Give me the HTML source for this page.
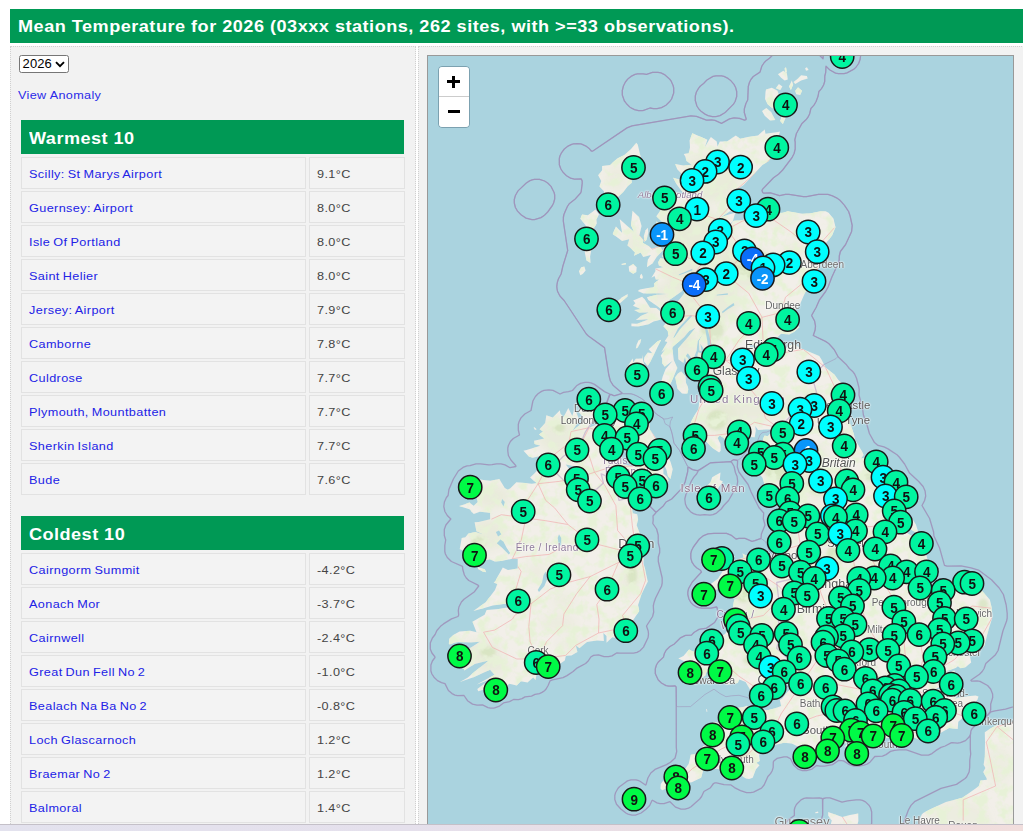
<!DOCTYPE html>
<html><head><meta charset="utf-8"><title>Mean Temperature</title>
<style>
html,body{margin:0;padding:0;background:#fff;}
body{font-family:"Liberation Sans",sans-serif;width:1023px;height:831px;overflow:hidden;position:relative;}
#hdr{position:absolute;left:10px;top:9px;width:1100px;height:34px;background:#009955;}
#hdr span{position:absolute;left:8px;top:9px;color:#fff;font-weight:bold;font-size:16px;line-height:18px;white-space:nowrap;letter-spacing:0.45px;transform-origin:0 50%;transform:scaleX(1.13);}
#lp{position:absolute;left:10px;top:46px;width:404px;height:900px;background:#f2f2f2;border:1px dotted #d0d0d0;}
#rp{position:absolute;left:418px;top:46px;width:700px;height:900px;background:#f2f2f2;border:1px dotted #d0d0d0;}
#sel{position:absolute;left:19px;top:55px;width:48px;height:16px;border:1px solid #767676;border-radius:2.5px;background:#fff;font-size:13px;line-height:16px;color:#000;}
#sel span{position:absolute;left:2.6px;top:0px;letter-spacing:0.1px;}
#sel svg{position:absolute;left:35px;top:5px;}
#va{position:absolute;left:18px;top:88px;font-size:11.5px;line-height:14px;color:#2a2ae8;white-space:nowrap;letter-spacing:0.3px;transform-origin:0 50%;transform:scaleX(1.1);}
.tbl{position:absolute;left:21px;width:383px;}
.th{height:34px;background:#009955;position:relative;margin-bottom:3px;}
.th span{position:absolute;left:8px;top:9.5px;color:#fff;font-weight:bold;font-size:16px;line-height:18px;letter-spacing:0.42px;white-space:nowrap;transform-origin:0 50%;transform:scaleX(1.13);}
.row{height:32px;margin-bottom:2px;position:relative;}
.c1,.c2{position:absolute;top:0;height:30px;border:1px solid #e2e2e2;background:#f3f3f3;}
.c1{left:0;width:283px;}
.c2{left:287.6px;width:94px;}
.c1 span{position:absolute;left:7px;top:8.8px;word-spacing:-0.8px;font-size:11.5px;line-height:14px;color:#2222e6;white-space:nowrap;letter-spacing:0.35px;transform-origin:0 50%;transform:scaleX(1.1);}
.c2 span{position:absolute;left:7px;top:8.8px;font-size:11.5px;line-height:14px;color:#444;white-space:nowrap;letter-spacing:0.35px;transform-origin:0 50%;transform:scaleX(1.1);}
#map{position:absolute;left:427px;top:55px;width:585px;height:800px;border:1px solid #999;background:#aad3df;overflow:hidden;}
#map svg.land{position:absolute;left:0;top:0;}
.m{position:absolute;width:21.8px;height:21.8px;border:1.7px solid #181818;border-radius:50%;box-sizing:content-box;margin:-0.6px;text-align:center;font-weight:bold;font-size:15px;line-height:24.8px;color:#111;letter-spacing:-0.3px;}
.m b{display:inline-block;transform:scaleX(0.9);}
#mk circle{stroke:#181818;stroke-width:1.5px;}
#mk text{stroke:none;font-family:"Liberation Sans",sans-serif;font-weight:bold;font-size:15px;text-anchor:middle;letter-spacing:-0.3px;}
.m.g{background:#00f5a0;}
.m.c{background:#00ffff;}
.m.l{background:#00fa46;}
.m.b1{background:#0a96fa;color:#fff;}
.m.b2{background:#0a6efa;color:#fff;}
#zc{position:absolute;left:9.6px;top:9.6px;width:30px;height:60px;border:1.4px solid rgba(40,70,90,0.35);border-radius:4px;background-clip:padding-box;}
#zc div{width:30px;height:30px;background:#fff;position:relative;box-sizing:border-box;}
#zc div.a{border-bottom:1px solid #ccc;border-radius:3px 3px 0 0;}
#zc div.b{border-radius:0 0 3px 3px;}
#zc i{position:absolute;background:#000;}
#bot{position:absolute;left:0;top:824px;width:1023px;height:7px;background:linear-gradient(90deg,#e3e2ee 0%,#e5e0ec 40%,#eddde0 75%,#f1dedd 100%);border-top:1px solid #c4c0c8;box-sizing:border-box;}
.lbl{position:absolute;font-size:11px;color:#666;white-space:nowrap;transform:translate(-50%,-50%);line-height:1;text-shadow:0 0 2px #fff,0 0 2px #fff,0 0 1px #fff;}
</style></head><body>
<div id="hdr"><span>Mean Temperature for 2026 (03xxx stations, 262 sites, with &gt;=33 observations).</span></div>
<div id="lp"></div><div id="rp"></div>
<div id="sel"><span>2026</span><svg width="10" height="7" viewBox="0 0 10 7"><path d="M1 1.2 L5 5.2 L9 1.2" fill="none" stroke="#000" stroke-width="1.9"/></svg></div>
<div id="va">View Anomaly</div>
<div class="tbl" style="top:120px"><div class="th"><span>Warmest 10</span></div><div class="row"><div class="c1"><span>Scilly: St Marys Airport</span></div><div class="c2"><span>9.1°C</span></div></div><div class="row"><div class="c1"><span>Guernsey: Airport</span></div><div class="c2"><span>8.0°C</span></div></div><div class="row"><div class="c1"><span>Isle Of Portland</span></div><div class="c2"><span>8.0°C</span></div></div><div class="row"><div class="c1"><span>Saint Helier</span></div><div class="c2"><span>8.0°C</span></div></div><div class="row"><div class="c1"><span>Jersey: Airport</span></div><div class="c2"><span>7.9°C</span></div></div><div class="row"><div class="c1"><span>Camborne</span></div><div class="c2"><span>7.8°C</span></div></div><div class="row"><div class="c1"><span>Culdrose</span></div><div class="c2"><span>7.7°C</span></div></div><div class="row"><div class="c1"><span>Plymouth, Mountbatten</span></div><div class="c2"><span>7.7°C</span></div></div><div class="row"><div class="c1"><span>Sherkin Island</span></div><div class="c2"><span>7.7°C</span></div></div><div class="row"><div class="c1"><span>Bude</span></div><div class="c2"><span>7.6°C</span></div></div></div>
<div class="tbl" style="top:516.4px"><div class="th"><span>Coldest 10</span></div><div class="row"><div class="c1"><span>Cairngorm Summit</span></div><div class="c2"><span>-4.2°C</span></div></div><div class="row"><div class="c1"><span>Aonach Mor</span></div><div class="c2"><span>-3.7°C</span></div></div><div class="row"><div class="c1"><span>Cairnwell</span></div><div class="c2"><span>-2.4°C</span></div></div><div class="row"><div class="c1"><span>Great Dun Fell No 2</span></div><div class="c2"><span>-1.0°C</span></div></div><div class="row"><div class="c1"><span>Bealach Na Ba No 2</span></div><div class="c2"><span>-0.8°C</span></div></div><div class="row"><div class="c1"><span>Loch Glascarnoch</span></div><div class="c2"><span>1.2°C</span></div></div><div class="row"><div class="c1"><span>Braemar No 2</span></div><div class="c2"><span>1.2°C</span></div></div><div class="row"><div class="c1"><span>Balmoral</span></div><div class="c2"><span>1.4°C</span></div></div><div class="row"><div class="c1"><span>Altnaharra No 2</span></div><div class="c2"><span>1.5°C</span></div></div><div class="row"><div class="c1"><span>Aviemore</span></div><div class="c2"><span>1.6°C</span></div></div></div>
<div id="map">
<svg class="land" width="585" height="800" viewBox="0 0 585 800">
<path d="M459.8 -80.0 L459.7 -76.0 L458.8 -71.5 L457.2 -53.0 L451.1 -34.5 L443.2 -19.0 L438.0 -14.4 L435.0 -12.9 L429.9 -11.5 L429.9 -10.5 L432.1 -5.0 L432.7 -1.0 L432.1 3.5 L430.6 7.5 L428.2 11.0 L426.0 13.1 L419.0 16.9 L416.0 17.7 L410.5 17.7 L407.5 17.1 L401.9 14.0 L398.0 10.3 L397.7 16.5 L396.8 20.0 L396.7 25.5 L395.6 29.0 L393.5 32.6 L390.9 35.5 L390.1 40.0 L388.1 45.5 L386.0 49.1 L382.9 52.5 L381.6 58.0 L380.1 61.0 L378.5 63.2 L374.0 67.4 L368.4 77.5 L366.8 84.0 L367.2 86.0 L367.2 93.0 L366.1 97.5 L364.1 101.5 L354.7 114.0 L350.5 118.2 L345.5 121.8 L334.5 133.3 L334.0 134.5 L334.7 136.5 L335.5 137.2 L342.5 136.8 L351.5 139.7 L357.5 138.3 L361.0 138.3 L375.5 140.7 L378.5 140.7 L390.5 138.3 L400.0 138.4 L404.5 139.9 L409.5 142.4 L412.0 144.3 L416.5 149.4 L420.6 155.5 L422.1 160.0 L424.2 169.5 L423.6 175.5 L417.6 188.5 L412.4 195.5 L411.3 200.0 L411.2 204.0 L410.6 206.5 L403.9 221.0 L400.1 231.0 L397.6 235.5 L391.4 244.0 L388.1 251.5 L383.8 259.0 L383.8 260.0 L386.6 265.0 L387.5 270.0 L387.1 274.0 L385.3 279.5 L397.5 285.4 L400.7 287.5 L406.1 293.5 L410.3 301.0 L418.5 308.8 L421.3 312.5 L425.0 315.8 L426.6 318.0 L428.6 322.5 L430.7 330.5 L431.2 333.5 L431.0 339.0 L432.2 343.5 L432.9 349.0 L434.7 353.5 L435.4 359.0 L438.6 367.5 L441.4 377.5 L446.5 386.6 L450.0 389.4 L456.0 390.9 L460.0 392.9 L469.0 398.8 L471.2 401.0 L476.6 408.0 L481.5 417.1 L490.5 425.3 L495.1 430.5 L497.1 435.0 L497.7 440.0 L496.6 444.5 L494.0 449.5 L501.6 462.5 L505.6 476.0 L505.9 480.0 L511.6 492.0 L516.5 509.4 L519.0 510.2 L533.0 509.8 L543.0 511.9 L550.5 514.1 L563.5 523.8 L571.2 532.0 L575.4 538.5 L578.2 549.0 L579.2 557.5 L579.2 562.0 L578.6 565.0 L574.9 575.0 L570.1 594.5 L567.5 598.7 L557.8 607.5 L556.1 612.5 L554.2 615.5 L551.5 618.2 L543.5 623.7 L542.9 624.5 L543.5 625.1 L549.0 624.8 L552.0 625.4 L559.6 629.5 L562.6 633.0 L564.6 638.0 L564.7 641.5 L562.7 648.0 L562.7 653.5 L562.1 656.0 L556.2 663.0 L548.0 668.8 L543.8 673.0 L542.9 675.0 L542.6 678.0 L541.1 681.0 L537.5 684.6 L532.5 686.7 L529.5 687.2 L524.0 686.6 L523.0 686.9 L517.2 690.0 L513.0 691.4 L508.0 694.4 L504.0 697.6 L500.5 699.1 L493.5 699.1 L478.5 693.8 L471.0 693.8 L466.5 694.3 L462.5 695.4 L458.0 698.6 L454.5 700.1 L446.8 700.5 L442.0 706.2 L439.0 708.1 L436.0 709.1 L431.0 710.2 L426.0 710.2 L421.5 708.6 L415.5 704.9 L411.0 704.3 L404.5 708.6 L396.5 710.2 L392.0 710.2 L388.5 709.5 L384.0 713.1 L378.5 714.7 L374.5 714.7 L370.0 713.1 L366.0 709.6 L362.5 702.8 L359.0 700.9 L356.0 700.8 L349.0 702.4 L345.8 705.0 L345.3 706.0 L345.2 711.5 L344.1 715.0 L342.5 717.6 L339.9 720.5 L336.1 729.0 L333.5 732.1 L325.5 736.1 L322.5 736.7 L318.5 736.6 L312.5 734.6 L306.5 731.6 L303.0 728.9 L296.0 728.7 L288.5 726.8 L287.0 726.8 L285.5 727.5 L282.5 731.7 L275.9 735.5 L273.6 740.5 L271.7 743.0 L263.0 750.7 L260.5 752.1 L257.0 753.2 L253.0 753.2 L247.5 751.1 L242.0 745.7 L236.0 747.7 L232.0 747.7 L229.0 746.9 L224.5 744.2 L224.0 744.5 L221.7 749.5 L218.0 753.2 L213.1 757.0 L207.5 759.1 L204.0 759.2 L200.0 758.1 L197.9 757.0 L192.8 753.0 L188.5 748.2 L186.8 743.5 L186.8 739.5 L187.5 736.8 L189.9 732.5 L191.5 730.8 L198.0 725.9 L199.5 724.9 L203.0 723.8 L208.0 723.8 L210.0 724.4 L211.6 725.0 L217.5 729.0 L218.0 728.9 L219.9 722.0 L222.8 717.0 L227.0 713.4 L238.5 708.6 L242.5 706.2 L247.1 702.0 L248.7 695.5 L248.3 691.5 L248.2 631.0 L247.0 629.8 L241.0 630.2 L238.0 629.6 L233.4 627.0 L230.3 624.0 L227.3 617.5 L227.3 612.5 L228.4 609.0 L230.3 606.0 L235.5 601.1 L236.4 597.5 L238.3 594.0 L241.9 590.5 L246.0 588.2 L252.5 581.8 L257.5 579.4 L263.5 579.1 L265.9 576.5 L271.0 573.4 L278.5 572.1 L286.6 566.5 L290.5 560.0 L289.0 551.3 L288.5 551.0 L283.0 552.2 L274.0 552.2 L270.5 551.6 L268.0 550.6 L265.0 548.7 L263.0 546.6 L260.9 543.0 L259.8 538.5 L259.8 536.0 L260.6 532.5 L264.3 526.0 L273.5 516.0 L272.5 514.3 L268.9 512.0 L266.0 509.2 L264.0 506.2 L262.8 502.0 L262.8 497.5 L263.6 494.5 L265.4 491.0 L271.3 483.0 L275.0 479.9 L280.0 477.8 L286.0 477.3 L298.5 477.3 L303.5 479.4 L308.0 483.0 L311.0 482.3 L317.0 482.3 L324.0 485.4 L327.0 484.6 L333.0 482.3 L333.4 478.0 L337.0 469.0 L335.3 462.5 L335.7 457.0 L330.9 451.5 L323.1 436.0 L320.1 428.5 L310.9 416.0 L309.3 411.0 L309.6 405.0 L309.0 404.3 L305.5 403.7 L302.5 405.7 L282.5 406.8 L272.0 413.6 L269.5 414.7 L264.5 413.6 L261.0 411.4 L260.0 411.5 L259.7 415.5 L257.1 426.0 L254.5 431.6 L243.7 443.0 L238.0 446.0 L235.5 449.7 L228.5 456.0 L227.3 455.5 L217.6 446.0 L214.0 445.1 L206.5 441.9 L203.0 441.3 L192.5 443.7 L190.5 443.6 L189.9 442.5 L188.6 436.0 L187.1 432.0 L184.6 429.0 L181.0 427.3 L178.5 427.0 L174.5 427.9 L168.5 433.1 L152.0 438.6 L150.0 438.7 L123.3 412.5 L123.8 411.0 L134.5 400.3 L147.5 392.1 L150.2 389.5 L152.1 386.5 L157.9 374.5 L162.9 366.5 L171.0 362.7 L173.2 360.5 L176.6 355.5 L177.2 354.0 L177.4 350.5 L182.0 338.6 L183.0 338.4 L185.5 339.6 L187.0 339.7 L193.5 337.7 L194.0 337.0 L185.0 329.2 L182.4 325.0 L180.8 319.0 L176.5 291.6 L160.4 280.0 L158.3 278.0 L136.1 244.5 L131.9 240.0 L129.4 235.0 L128.8 230.5 L129.4 226.0 L130.5 222.8 L133.1 218.0 L134.9 210.0 L139.7 194.5 L135.3 165.0 L135.3 161.5 L135.9 158.5 L139.4 150.5 L141.5 147.4 L147.0 143.2 L152.6 137.0 L153.2 135.5 L154.2 127.5 L154.2 125.0 L153.3 123.0 L146.5 123.2 L142.5 122.1 L138.5 119.7 L134.8 116.0 L132.9 113.0 L131.4 109.0 L131.3 102.5 L131.9 100.0 L133.5 96.8 L136.3 93.0 L139.5 90.4 L143.5 88.4 L145.5 87.8 L149.0 87.6 L153.0 87.9 L158.5 90.4 L161.5 92.8 L163.3 95.0 L164.5 95.2 L199.0 71.9 L204.0 69.8 L263.0 59.8 L268.5 60.4 L278.5 64.2 L283.5 63.8 L287.0 64.4 L293.5 67.4 L301.5 62.9 L306.0 61.8 L311.5 62.3 L316.5 64.2 L318.0 63.6 L318.2 63.0 L316.3 56.5 L316.3 53.0 L317.9 47.5 L319.7 44.0 L320.3 30.5 L321.4 26.5 L322.9 23.5 L325.3 20.5 L332.0 16.1 L333.9 10.0 L336.3 6.5 L338.0 4.8 L341.5 2.2 L346.5 -2.7 L348.5 -4.1 L353.5 -6.1 L357.5 -6.7 L361.5 -6.1 L368.0 -3.3 L375.0 -6.2 L378.5 -6.7 L382.5 -6.1 L385.7 -5.0 L389.0 -3.1 L395.0 2.7 L395.2 1.0 L394.8 -2.0 L395.3 -5.5 L396.0 -8.2 L398.5 -12.6 L404.0 -17.6 L408.0 -19.6 L413.1 -21.0 L413.1 -22.0 L408.9 -30.0 L406.5 -38.0 L405.5 -37.9 L402.0 -35.6 L398.5 -34.3 L392.5 -33.8 L389.0 -34.4 L385.5 -35.9 L381.0 -39.3 L376.4 -44.5 L374.4 -49.0 L373.8 -51.5 L373.8 -57.0 L374.9 -60.5 L378.4 -66.5 L382.8 -71.0 L385.0 -72.6 L390.0 -74.6 L393.1 -75.0 L395.5 -80.0 M215.0 54.6 L210.5 54.7 L206.5 53.6 L203.5 52.1 L202.0 51.2 L198.5 47.7 L196.4 45.0 L194.3 39.0 L194.3 34.5 L195.4 30.0 L197.4 26.0 L199.8 23.0 L203.0 20.4 L207.0 18.4 L209.5 17.8 L215.0 17.8 L218.5 18.4 L224.5 16.3 L230.0 16.3 L233.0 16.9 L237.0 18.9 L241.5 22.9 L243.1 25.0 L245.1 29.5 L245.7 32.0 L245.7 37.0 L243.6 43.0 L242.2 45.0 L238.0 49.2 L233.5 51.6 L229.0 52.7 L225.5 52.7 L222.0 52.0 L215.0 54.6 M288.0 60.6 L284.5 60.7 L280.0 59.6 L277.0 58.1 L273.0 55.2 L270.8 53.0 L268.9 50.0 L267.3 44.5 L267.3 40.0 L268.4 36.0 L270.5 32.4 L272.4 30.0 L275.6 27.5 L278.9 24.0 L285.0 20.4 L288.0 19.8 L293.5 19.8 L296.0 20.4 L300.0 22.4 L303.0 24.8 L306.0 28.4 L307.6 31.5 L308.7 35.5 L308.7 40.5 L307.1 45.5 L305.5 48.1 L297.2 56.5 L292.0 59.6 L288.0 60.6 M106.5 163.6 L104.0 163.7 L98.0 162.1 L93.0 158.7 L89.5 155.1 L87.4 151.5 L86.3 147.0 L86.3 143.5 L87.4 139.5 L90.0 134.9 L98.0 127.3 L101.5 124.9 L104.0 123.9 L106.5 123.3 L111.5 123.3 L116.6 125.0 L120.0 127.3 L123.0 130.4 L126.1 136.5 L126.7 139.0 L126.7 143.0 L125.6 147.0 L124.4 149.5 L119.7 156.0 L116.5 159.2 L113.0 161.6 L106.5 163.6 M66.0 652.1 L62.5 652.2 L60.0 651.6 L54.5 648.8 L49.0 649.2 L44.5 648.1 L39.5 644.7 L36.0 639.5 L29.5 639.7 L27.0 639.1 L24.0 637.6 L20.4 634.5 L17.0 627.6 L13.5 626.6 L9.5 624.6 L6.0 621.2 L3.9 618.0 L2.9 615.0 L2.9 609.0 L4.4 605.0 L7.0 601.5 L6.7 600.5 L3.9 597.0 L2.3 593.0 L2.3 587.0 L4.4 582.0 L7.1 578.5 L8.9 574.5 L12.5 570.3 L15.5 567.9 L23.5 562.9 L30.0 560.5 L30.7 559.0 L30.3 554.5 L30.9 551.0 L33.4 546.0 L36.0 543.3 L46.5 535.7 L50.7 530.0 L50.0 529.1 L40.8 524.5 L38.3 522.0 L36.4 519.0 L34.8 513.5 L34.5 510.4 L23.4 505.5 L19.3 501.5 L17.4 498.0 L16.8 495.5 L16.8 489.5 L17.7 484.0 L16.3 479.5 L16.3 473.5 L17.9 469.0 L22.8 463.0 L19.3 459.5 L16.9 455.5 L15.8 450.5 L16.4 446.0 L18.4 441.5 L20.1 439.5 L20.9 433.5 L25.4 423.0 L30.3 415.0 L35.0 411.4 L39.0 409.9 L42.0 409.7 L48.0 407.8 L52.5 407.8 L61.0 408.8 L64.0 408.7 L68.5 407.8 L73.0 407.8 L77.0 408.9 L82.0 411.7 L87.9 410.5 L87.7 409.5 L82.9 404.0 L80.4 399.5 L79.8 395.0 L79.8 392.0 L80.4 389.5 L82.4 385.5 L85.3 382.5 L91.5 379.0 L90.3 374.0 L90.3 368.5 L91.0 365.8 L93.0 361.9 L96.8 358.0 L103.0 354.5 L104.9 345.0 L107.4 340.5 L110.0 337.8 L113.5 335.4 L116.0 334.4 L121.0 333.8 L125.0 334.4 L132.0 338.0 L135.5 336.4 L140.5 335.7 L144.5 334.5 L148.5 329.8 L152.5 327.4 L157.0 326.3 L160.5 326.3 L163.0 326.9 L166.5 328.4 L176.5 335.6 L181.7 338.0 L177.4 350.5 L176.9 355.0 L173.5 360.1 L171.0 362.7 L162.9 366.5 L157.9 374.5 L152.1 386.5 L150.0 389.7 L147.5 392.1 L134.5 400.3 L123.2 412.0 L128.0 417.2 L130.5 419.3 L150.0 438.7 L152.0 438.6 L168.5 433.1 L174.5 427.9 L178.5 427.0 L181.0 427.3 L184.6 429.0 L187.1 432.0 L188.6 436.0 L189.9 442.5 L190.5 443.6 L192.5 443.7 L203.0 441.3 L208.0 442.4 L214.0 445.1 L218.0 446.3 L227.7 456.0 L227.7 457.0 L225.0 460.0 L225.2 464.0 L224.8 467.5 L228.6 473.0 L230.2 479.0 L230.3 487.0 L231.7 492.5 L231.7 496.5 L230.3 501.0 L230.3 505.5 L234.2 522.0 L234.2 527.0 L233.6 530.0 L227.5 542.3 L225.9 547.0 L225.3 550.0 L225.7 556.0 L224.6 560.5 L218.5 570.0 L220.2 575.0 L220.5 578.0 L220.1 581.5 L215.5 591.1 L212.0 594.7 L209.0 596.4 L205.5 597.2 L191.5 597.2 L189.0 596.8 L184.0 599.9 L180.5 600.7 L176.0 600.7 L170.5 598.8 L165.5 599.4 L162.8 601.0 L160.2 605.0 L157.6 607.5 L148.5 612.4 L145.1 615.5 L139.0 619.6 L135.0 621.6 L124.5 623.9 L122.0 624.9 L120.1 629.5 L118.1 633.0 L116.5 634.7 L114.0 636.4 L111.5 637.6 L107.0 638.4 L103.5 640.1 L97.0 640.9 L94.0 642.6 L90.5 643.6 L85.5 643.5 L81.5 645.6 L75.5 646.9 L71.5 650.1 L66.0 652.1 M282.0 459.1 L276.5 458.6 L272.0 459.2 L268.5 458.7 L265.5 457.6 L262.5 455.7 L258.9 451.5 L257.4 448.0 L256.8 443.0 L257.9 438.5 L260.1 434.5 L260.9 431.0 L263.4 425.0 L266.0 420.9 L268.6 418.0 L270.5 414.4 L282.5 406.8 L287.5 406.3 L295.5 406.2 L298.0 405.8 L303.0 405.9 L304.1 407.0 L306.1 410.5 L307.4 416.5 L309.1 420.5 L309.7 425.5 L309.1 429.5 L300.6 444.5 L295.8 449.5 L293.2 453.0 L288.5 457.1 L285.0 458.6 L282.0 459.1 M603.0 791.6 L489.5 791.7 L485.5 790.6 L482.5 789.1 L479.5 786.1 L476.9 780.5 L475.3 772.5 L475.3 768.5 L475.9 766.0 L480.4 754.0 L483.0 749.4 L487.0 745.3 L513.0 732.4 L528.5 728.4 L537.1 722.5 L538.6 721.0 L541.1 716.0 L541.7 711.5 L541.8 704.0 L542.7 698.0 L542.3 693.0 L542.3 679.5 L542.9 675.0 L544.3 672.5 L548.0 668.8 L556.0 663.2 L563.0 655.9 L567.0 654.8 L577.5 653.1 L600.5 646.3 L603.0 646.3 L607.0 647.4 L611.5 650.3 L614.5 654.8 L615.7 659.5 L615.7 693.0 L615.3 696.0 L615.2 779.0 L614.6 782.0 L612.0 786.7 L609.5 789.1 L606.5 790.6 L603.0 791.6 M430.0 784.6 L407.5 784.7 L397.5 780.1 L393.3 777.5 L391.4 772.5 L390.6 768.0 L393.0 764.7 L394.7 759.0 L394.8 744.0 L395.4 742.5 L398.0 741.8 L402.0 741.8 L414.0 746.2 L419.5 744.8 L428.0 743.8 L432.0 743.8 L434.5 744.4 L437.5 745.9 L441.2 749.5 L442.6 752.0 L443.7 756.0 L443.7 767.0 L442.1 773.5 L440.6 777.5 L437.0 781.7 L432.5 784.1 L430.0 784.6 M392.0 807.1 L386.5 806.1 L379.5 801.7 L377.5 799.6 L375.9 797.0 L374.0 790.3 L370.5 790.2 L367.5 789.6 L363.5 787.6 L361.4 786.0 L357.9 782.5 L355.9 778.5 L355.3 776.0 L355.3 773.0 L355.9 770.5 L357.9 766.5 L361.0 763.3 L366.4 759.5 L366.3 754.0 L366.9 751.5 L368.4 748.5 L373.0 743.9 L376.0 742.4 L378.5 741.8 L385.0 742.2 L391.5 741.8 L394.0 742.5 L394.5 743.0 L394.7 759.0 L393.0 764.7 L390.6 768.0 L392.4 776.0 L393.5 777.7 L396.5 779.6 L406.5 784.4 L408.2 787.5 L408.7 790.0 L408.6 792.5 L407.6 796.0 L405.2 800.0 L403.1 802.0 L398.5 805.1 L395.0 806.6 L392.0 807.1" fill="none" stroke="#9f92ba" stroke-width="1.3" stroke-linejoin="round" opacity="0.9"/>
<path d="M459.8 -80.0 L459.7 -76.0 L458.8 -71.5 L457.2 -53.0 L451.1 -34.5 L443.2 -19.0 L438.0 -14.4 L435.0 -12.9 L429.9 -11.5 L429.9 -10.5 L432.1 -5.0 L432.7 -1.0 L432.1 3.5 L430.6 7.5 L428.2 11.0 L426.0 13.1 L419.0 16.9 L416.0 17.7 L410.5 17.7 L407.5 17.1 L401.9 14.0 L398.0 10.3 L397.7 16.5 L396.8 20.0 L396.7 25.5 L395.6 29.0 L393.5 32.6 L390.9 35.5 L390.1 40.0 L388.1 45.5 L386.0 49.1 L382.9 52.5 L381.6 58.0 L380.1 61.0 L378.5 63.2 L374.0 67.4 L368.4 77.5 L366.8 84.0 L367.2 86.0 L367.2 93.0 L366.1 97.5 L364.1 101.5 L354.5 114.2 L350.5 118.2 L345.8 121.5 L334.0 134.0 L334.4 136.0 L335.5 137.2 L342.5 136.8 L351.5 139.7 L357.5 138.3 L361.0 138.3 L375.5 140.7 L378.5 140.7 L390.5 138.3 L400.0 138.4 L404.5 139.9 L409.5 142.4 L412.0 144.3 L416.5 149.4 L420.6 155.5 L422.1 160.0 L424.2 169.5 L423.7 175.0 L423.1 177.0 L417.6 188.5 L412.4 195.5 L411.3 200.0 L411.2 204.0 L410.6 206.5 L403.9 221.0 L400.1 231.0 L397.6 235.5 L391.4 244.0 L388.1 251.5 L383.7 259.5 L386.6 265.0 L387.5 270.0 L387.1 274.0 L385.3 279.5 L397.5 285.4 L400.5 287.3 L404.2 291.0 L407.1 295.0 L409.6 300.0 L409.5 301.0 L408.0 302.6 L395.5 308.8 L390.8 313.5 L386.4 319.0 L385.3 323.5 L388.2 334.5 L388.4 336.5 L375.8 344.0 L373.3 346.5 L366.2 356.0 L350.6 372.0 L342.5 374.4 L338.5 376.1 L335.0 376.4 L333.5 377.3 L331.9 379.0 L330.1 383.5 L328.5 386.1 L324.0 388.8 L322.0 390.8 L313.5 401.7 L310.0 404.1 L305.0 403.8 L302.5 405.7 L282.5 406.8 L270.2 414.5 L268.5 414.7 L266.0 414.1 L262.5 412.6 L259.5 410.1 L251.6 394.5 L245.9 387.0 L244.6 379.5 L241.8 370.0 L242.4 365.5 L244.7 361.0 L239.5 362.7 L236.5 363.0 L235.5 362.7 L228.3 358.0 L219.3 348.5 L217.0 345.3 L213.5 342.4 L205.5 338.4 L203.0 337.8 L195.0 337.6 L187.5 331.7 L185.0 329.2 L182.4 325.0 L180.8 319.0 L176.5 291.6 L160.4 280.0 L158.3 278.0 L141.6 252.5 L136.0 244.4 L132.0 240.1 L129.9 236.5 L128.8 232.5 L128.9 228.0 L130.4 223.0 L133.1 218.0 L134.9 210.0 L139.7 194.5 L135.3 165.0 L135.8 159.0 L137.4 154.5 L139.9 149.5 L141.5 147.4 L147.0 143.2 L152.6 137.0 L153.2 135.5 L154.2 127.5 L154.2 125.0 L153.3 123.0 L146.5 123.2 L142.5 122.1 L138.5 119.7 L134.8 116.0 L132.6 112.5 L131.3 108.5 L131.3 103.0 L131.9 100.0 L133.9 96.0 L136.5 92.8 L139.5 90.4 L145.5 87.8 L152.0 87.8 L154.5 88.4 L158.5 90.4 L161.5 92.8 L163.3 95.0 L164.5 95.2 L199.0 71.9 L204.0 69.8 L263.0 59.8 L268.5 60.4 L278.5 64.2 L283.5 63.8 L287.0 64.4 L293.5 67.4 L301.5 62.9 L306.0 61.8 L311.5 62.3 L316.5 64.2 L318.0 63.6 L318.2 63.0 L316.3 56.5 L316.3 53.0 L317.9 47.5 L319.7 44.0 L320.3 30.5 L321.4 26.5 L322.9 23.5 L325.3 20.5 L332.0 16.1 L333.9 10.0 L336.3 6.5 L338.0 4.8 L341.5 2.2 L346.5 -2.7 L348.5 -4.1 L353.5 -6.1 L357.5 -6.7 L361.5 -6.1 L368.0 -3.3 L375.0 -6.2 L378.5 -6.7 L382.5 -6.1 L385.7 -5.0 L389.0 -3.1 L395.0 2.7 L395.2 1.0 L394.8 -2.0 L395.3 -5.5 L396.0 -8.2 L398.5 -12.6 L404.0 -17.6 L408.0 -19.6 L413.1 -21.0 L413.1 -22.0 L408.9 -30.0 L406.5 -38.0 L405.5 -37.9 L402.0 -35.6 L398.5 -34.3 L392.5 -33.8 L389.0 -34.4 L385.5 -35.9 L381.0 -39.3 L376.4 -44.5 L374.4 -49.0 L373.8 -51.5 L373.8 -57.0 L374.9 -60.5 L378.4 -66.5 L382.8 -71.0 L385.0 -72.6 L390.0 -74.6 L393.1 -75.0 L395.5 -80.0 M215.0 54.6 L210.5 54.7 L206.5 53.6 L203.5 52.1 L202.0 51.2 L198.5 47.7 L196.4 45.0 L194.3 39.0 L194.3 34.5 L195.4 30.0 L197.4 26.0 L199.8 23.0 L203.0 20.4 L207.0 18.4 L209.5 17.8 L215.0 17.8 L218.5 18.4 L224.5 16.3 L230.0 16.3 L233.0 16.9 L237.0 18.9 L241.5 22.9 L243.1 25.0 L245.1 29.5 L245.7 32.0 L245.7 37.0 L243.6 43.0 L242.2 45.0 L238.0 49.2 L233.5 51.6 L229.0 52.7 L225.5 52.7 L222.0 52.0 L215.0 54.6 M288.0 60.6 L284.5 60.7 L280.0 59.6 L277.0 58.1 L273.0 55.2 L270.8 53.0 L268.9 50.0 L267.3 44.5 L267.3 40.0 L268.4 36.0 L270.5 32.4 L272.4 30.0 L275.6 27.5 L278.9 24.0 L285.0 20.4 L288.0 19.8 L293.5 19.8 L296.0 20.4 L300.0 22.4 L303.0 24.8 L306.0 28.4 L307.6 31.5 L308.7 35.5 L308.7 40.5 L307.1 45.5 L305.5 48.1 L297.2 56.5 L292.0 59.6 L288.0 60.6 M106.5 163.6 L104.0 163.7 L98.0 162.1 L93.0 158.7 L89.5 155.1 L87.4 151.5 L86.3 147.0 L86.3 143.5 L87.4 139.5 L90.0 134.9 L98.0 127.3 L101.5 124.9 L104.0 123.9 L106.5 123.3 L111.5 123.3 L116.6 125.0 L120.0 127.3 L123.0 130.4 L126.1 136.5 L126.7 139.0 L126.7 143.0 L125.6 147.0 L124.4 149.5 L119.7 156.0 L116.5 159.2 L113.0 161.6 L106.5 163.6 M262.5 650.6 L250.0 650.7 L248.5 650.3 L248.0 630.5 L246.5 629.8 L244.0 630.2 L240.0 630.1 L237.0 629.1 L233.0 626.7 L230.0 623.6 L227.9 619.5 L227.3 617.5 L227.3 613.5 L228.9 608.0 L230.5 605.8 L235.2 601.5 L236.4 597.5 L237.9 594.5 L241.5 590.8 L246.0 588.2 L252.5 581.8 L254.0 580.9 L258.0 579.3 L263.5 579.1 L265.9 576.5 L270.5 573.6 L273.0 572.8 L277.5 572.5 L278.5 572.1 L286.6 566.5 L290.5 560.0 L289.0 551.3 L288.5 551.0 L283.0 552.2 L274.0 552.2 L270.5 551.6 L268.0 550.6 L265.0 548.7 L263.0 546.6 L260.9 543.0 L259.8 538.5 L259.8 536.0 L260.6 532.5 L264.3 526.0 L273.5 516.0 L272.5 514.3 L268.9 512.0 L266.3 509.5 L264.1 506.5 L262.8 502.0 L262.8 497.5 L263.4 495.0 L265.4 491.0 L271.0 483.3 L275.0 479.9 L280.0 477.8 L286.0 477.3 L298.5 477.3 L303.5 479.4 L308.0 483.0 L311.0 482.3 L317.0 482.3 L324.0 485.4 L331.5 482.9 L333.5 482.9 L336.1 484.5 L337.6 486.0 L341.8 496.0 L350.0 503.8 L353.7 508.0 L363.7 522.0 L363.5 522.5 L362.0 523.1 L355.0 524.9 L352.5 526.8 L350.4 529.5 L349.8 531.5 L349.8 536.5 L350.7 545.0 L348.8 558.5 L349.9 563.5 L353.2 574.0 L349.8 588.0 L350.4 591.5 L352.3 595.0 L364.1 606.5 L367.7 621.5 L366.6 625.0 L364.0 628.1 L356.0 632.3 L352.3 635.5 L348.5 641.1 L345.7 644.0 L341.5 646.1 L336.0 646.2 L331.0 645.3 L327.0 645.2 L324.0 644.1 L319.0 641.4 L311.0 639.3 L303.5 639.8 L298.0 640.7 L292.0 637.6 L286.0 633.2 L276.9 638.5 L262.5 650.6 M229.0 455.7 L227.5 455.7 L217.6 446.0 L214.0 445.1 L206.5 441.9 L203.0 441.3 L192.5 443.7 L190.5 443.6 L189.9 442.5 L188.6 436.0 L187.1 432.0 L184.6 429.0 L181.0 427.3 L178.5 427.0 L174.5 427.9 L168.5 433.1 L152.0 438.6 L150.0 438.7 L123.3 412.5 L123.8 411.0 L134.5 400.3 L147.5 392.1 L150.2 389.5 L152.1 386.5 L157.9 374.5 L162.9 366.5 L171.0 362.7 L173.2 360.5 L176.6 355.5 L177.2 354.0 L177.4 350.5 L179.4 344.5 L182.2 338.5 L183.0 338.4 L186.5 339.7 L193.5 337.8 L203.0 337.8 L208.5 339.6 L215.7 344.0 L219.3 348.5 L228.3 358.0 L235.7 363.0 L237.0 367.6 L241.6 370.5 L243.6 375.5 L246.0 387.2 L251.6 394.5 L259.6 410.5 L259.6 416.0 L257.1 426.0 L254.6 431.5 L243.7 443.0 L238.0 446.0 L235.5 449.7 L229.0 455.7" fill="none" stroke="#9f92ba" stroke-width="1.0" stroke-linejoin="round" opacity="0.55"/>
<polygon points="264.3,77.3 275.4,82.0 279.4,83.7 276.7,91.4 281.1,83.7 282.9,81.1 288.7,85.4 289.6,90.5 291.8,85.4 298.9,85.4 307.8,79.4 312.2,82.8 319.8,81.1 330.0,79.4 336.7,73.5 337.5,77.7 350.0,76.0 352.0,75.6 348.7,85.4 350.9,89.7 349.5,93.0 340.7,104.9 334.4,109.1 324.2,120.1 315.3,129.3 310.0,132.7 307.8,135.2 308.7,140.2 304.2,143.5 295.3,141.0 302.0,144.4 307.3,145.2 316.7,143.5 318.7,141.4 313.1,151.0 308.7,156.0 302.0,155.2 291.8,161.8 300.7,158.5 307.3,156.8 304.7,165.6 297.6,171.8 290.0,172.6 298.9,173.0 305.6,164.7 314.4,164.3 326.0,158.5 331.3,154.8 340.7,153.5 349.1,157.3 354.9,156.8 359.8,155.2 366.9,156.4 374.9,157.7 382.9,157.3 392.6,155.2 397.5,155.2 400.6,156.8 405.5,162.7 407.5,171.3 404.2,179.2 400.6,184.1 397.5,187.4 394.4,201.0 395.3,201.4 388.6,215.7 385.3,225.4 377.1,236.4 371.7,248.9 365.1,255.7 358.9,256.1 354.4,256.9 346.4,261.3 356.2,258.1 358.4,257.3 362.0,258.1 362.4,266.2 371.5,271.0 366.4,275.8 361.1,278.5 353.1,277.7 346.4,284.5 342.9,288.9 335.8,292.5 326.4,289.3 321.1,287.7 322.0,290.9 326.4,291.7 335.3,294.1 345.5,294.9 350.9,297.2 354.9,295.7 360.2,290.1 365.5,288.5 374.6,292.9 391.3,300.0 393.5,303.6 397.5,311.5 406.4,318.6 410.4,324.1 413.1,326.4 415.7,335.1 414.8,341.3 416.6,345.6 417.9,353.4 419.7,357.3 419.7,362.0 423.3,370.5 425.9,378.3 427.3,384.0 433.9,395.2 435.7,399.0 433.0,402.5 439.3,401.0 443.3,403.6 451.3,405.6 459.3,410.9 462.8,415.5 464.6,417.8 469.0,426.6 474.6,431.9 482.8,439.5 477.9,442.1 479.2,455.0 487.9,468.5 491.5,480.1 488.6,476.7 477.5,470.7 471.7,468.1 461.9,469.2 455.3,470.7 466.8,471.5 477.9,476.0 483.2,479.7 485.5,481.6 493.0,487.6 497.9,497.6 501.7,512.1 501.2,515.8 495.2,524.3 489.9,528.0 490.8,531.7 495.7,536.1 502.3,537.5 506.3,531.7 508.1,526.5 514.8,524.7 524.1,525.0 530.8,524.7 540.1,526.9 544.1,527.6 550.3,532.0 554.8,535.7 561.9,543.8 563.6,551.5 564.5,561.0 561.0,572.2 557.6,584.9 556.5,589.6 549.4,596.5 546.3,599.0 543.7,599.7 540.5,596.5 535.2,599.4 541.9,600.1 543.2,606.6 537.4,611.2 532.5,612.3 529.9,610.2 527.7,612.0 521.9,614.1 517.4,615.2 522.8,615.9 526.3,614.5 528.1,618.8 527.7,622.7 521.0,622.7 526.3,623.8 528.5,624.5 521.9,629.9 517.9,629.5 512.1,630.9 502.3,634.9 496.1,633.1 502.8,635.6 508.6,633.1 518.3,634.5 520.1,635.6 524.1,637.3 527.7,638.8 528.5,640.9 526.3,642.7 531.7,641.6 536.5,640.9 539.7,640.2 547.6,639.5 550.5,640.5 549.4,643.7 547.2,646.6 548.5,651.6 547.2,657.2 545.0,658.3 538.8,661.5 534.3,662.2 530.3,665.7 529.7,673.1 521.0,672.1 512.1,677.3 507.2,678.7 499.2,683.7 497.0,685.8 490.8,683.3 488.8,682.6 480.1,679.8 469.9,680.5 462.4,681.2 456.4,682.6 451.3,686.8 444.2,682.6 441.9,679.1 437.5,681.9 433.0,681.2 428.2,677.7 424.2,674.2 424.2,676.3 428.2,679.8 425.9,682.3 418.4,684.7 417.5,687.5 415.7,686.8 408.6,687.2 402.8,687.2 399.7,689.3 400.8,692.4 399.5,695.6 394.8,696.6 391.7,694.5 386.4,693.8 377.5,694.5 377.3,701.2 376.6,697.3 370.9,691.0 363.8,687.5 355.8,686.8 350.0,688.2 342.4,689.6 338.9,693.1 334.9,694.2 332.7,689.6 332.4,696.6 331.1,699.1 331.8,705.0 328.2,706.7 331.5,709.2 327.8,713.4 324.7,721.7 321.1,723.1 318.0,722.4 314.4,720.3 313.6,717.5 305.1,715.5 302.5,712.0 298.9,715.5 288.7,712.7 280.2,714.1 275.4,713.7 273.1,721.7 263.8,726.2 261.6,726.6 262.0,733.5 255.1,739.7 252.7,735.6 250.0,731.4 242.0,728.6 240.3,731.4 234.1,734.2 232.5,732.4 232.7,728.3 234.5,725.5 242.9,722.1 245.6,723.8 246.7,720.3 251.4,718.9 254.0,714.8 257.4,712.7 260.7,707.8 262.7,698.7 267.4,698.0 271.8,695.6 274.9,690.3 277.8,688.9 284.0,679.1 285.4,665.7 290.9,667.1 298.0,664.3 304.2,661.5 297.1,657.2 298.5,653.7 303.3,652.3 307.3,652.3 316.2,650.8 318.2,649.8 325.1,651.6 332.2,652.3 338.4,654.4 347.3,652.3 353.1,650.1 351.8,644.1 354.0,642.7 359.3,635.9 363.3,632.4 366.4,631.3 368.0,627.4 369.5,624.5 376.2,615.9 374.0,616.6 367.8,622.0 364.2,625.9 354.0,628.8 346.0,634.5 345.5,638.4 341.1,639.5 335.8,639.8 328.2,638.8 322.0,633.4 317.6,625.9 311.3,623.4 309.8,627.0 299.3,628.8 294.0,627.0 297.6,621.6 304.2,620.2 297.6,618.8 292.2,616.6 291.8,612.3 284.2,614.5 278.0,616.6 277.6,619.5 273.6,622.0 267.8,624.9 261.6,623.1 257.1,618.8 266.5,617.3 259.8,616.6 256.5,618.8 253.2,614.8 259.6,611.6 258.7,606.2 255.8,605.1 250.3,602.6 255.4,600.1 261.1,593.6 265.4,595.8 268.3,593.3 271.8,594.3 276.2,587.5 278.5,587.8 284.5,586.0 292.7,580.2 297.1,578.1 304.7,565.7 306.5,560.2 306.2,557.0 311.8,555.1 306.5,556.2 304.5,553.3 306.2,543.4 310.9,541.6 306.0,542.7 302.0,536.1 303.1,533.1 304.2,529.1 298.2,529.1 290.5,531.3 286.5,536.1 282.9,537.5 277.1,537.5 274.7,537.9 276.7,535.0 284.0,526.9 290.0,522.8 293.6,516.9 296.2,512.5 299.8,508.8 302.9,505.8 311.8,502.8 315.8,501.4 314.4,497.3 316.7,498.8 321.1,500.6 327.3,501.0 331.3,499.1 335.3,497.6 338.9,496.5 347.3,504.3 350.4,506.5 350.0,501.4 344.2,495.0 345.1,493.5 351.3,490.2 352.6,493.9 357.5,498.4 362.9,497.6 357.5,496.9 353.3,492.4 350.4,486.5 348.4,481.6 352.4,474.5 355.3,470.7 362.0,467.4 354.9,468.1 350.6,462.1 351.5,453.8 353.1,454.2 357.5,453.1 359.3,448.9 357.1,445.5 358.9,442.5 362.0,438.3 361.1,433.0 357.1,433.8 356.0,436.8 350.9,433.8 350.0,436.4 345.5,441.4 344.2,444.4 341.1,437.6 343.3,434.5 343.3,430.7 340.7,433.8 339.3,433.4 337.5,431.5 334.4,421.6 331.5,418.2 324.9,409.4 326.7,406.3 327.8,399.0 330.7,393.7 333.8,389.4 335.5,381.7 336.7,379.4 339.8,380.2 343.8,375.2 350.4,372.8 341.5,373.6 338.0,373.6 330.0,374.0 327.3,370.1 327.8,374.8 326.7,381.3 321.1,381.0 317.8,382.1 316.2,384.8 310.0,389.1 305.6,387.1 306.5,384.0 304.2,387.1 301.1,388.7 298.9,384.8 295.3,381.7 291.8,379.4 289.6,382.1 292.5,387.9 292.7,394.8 291.1,396.4 284.5,392.1 282.7,390.2 277.6,384.8 272.7,382.1 266.3,386.4 268.9,395.6 270.7,399.8 266.0,393.3 258.9,384.0 257.6,382.5 257.1,371.3 260.3,370.1 262.0,374.0 263.1,379.0 263.4,374.0 262.0,368.6 264.0,363.9 267.4,357.7 270.5,353.0 271.1,346.8 273.6,344.1 274.9,340.2 277.1,338.2 280.2,335.5 281.1,332.7 278.5,329.2 277.8,324.1 273.1,322.1 268.5,317.0 270.0,309.5 269.1,302.4 270.0,296.4 274.9,297.2 278.0,298.4 286.5,299.6 279.8,296.4 276.0,293.3 272.3,287.7 273.6,294.9 271.4,294.5 270.9,285.3 275.4,277.3 269.6,285.3 268.7,294.5 267.6,297.2 266.0,301.6 265.1,304.4 259.8,297.2 256.7,301.2 255.4,307.1 250.3,303.2 250.0,292.5 261.1,279.7 267.4,271.8 261.1,275.0 256.3,280.9 245.2,290.5 244.3,292.1 245.8,304.0 249.4,311.9 243.4,325.7 237.6,338.6 236.0,347.6 228.7,347.6 231.6,338.6 232.7,328.0 234.7,320.6 237.6,313.1 244.7,304.8 236.7,310.7 234.3,307.5 234.1,302.4 232.7,299.6 238.5,291.7 233.2,296.4 239.4,286.1 236.7,285.3 240.3,279.7 239.8,275.0 235.4,270.2 243.2,260.1 245.2,256.9 253.2,256.5 245.6,254.1 246.0,248.9 250.0,245.2 255.8,238.0 259.4,227.4 250.9,225.0 258.9,226.6 253.6,235.6 242.0,243.6 233.2,253.3 229.8,250.5 220.3,244.0 218.9,241.2 228.7,238.8 238.9,238.0 226.5,237.2 215.4,237.6 209.8,235.0 211.8,233.5 219.8,231.9 225.2,231.5 226.5,229.9 226.1,227.4 230.9,223.4 227.8,223.4 226.5,220.1 223.4,221.8 227.4,215.3 227.4,212.4 235.4,211.2 230.9,209.5 230.1,206.3 232.3,202.2 242.0,203.8 234.1,200.6 236.3,195.6 235.2,194.0 236.7,190.7 242.0,189.9 232.5,189.9 235.4,185.0 239.4,183.3 242.9,180.0 236.7,180.8 228.3,182.5 228.1,177.5 228.3,165.6 235.4,169.7 241.6,168.0 233.6,165.6 228.3,160.2 233.6,153.1 229.6,151.9 228.3,141.9 233.2,142.3 237.6,149.8 238.3,143.5 236.7,136.8 240.7,141.4 244.3,141.9 245.6,137.7 253.2,142.7 246.5,136.0 257.1,138.9 261.1,144.4 254.5,136.0 248.7,128.5 245.2,121.8 251.8,123.4 253.4,117.6 249.2,113.3 247.2,107.9 255.4,109.5 263.4,108.7 258.5,104.9 257.4,100.7 255.8,98.1 260.7,97.3 262.0,91.4 261.6,84.6" fill="#f2efe9" />
<polygon points="159.0,342.1 168.3,349.1 178.5,353.8 173.6,356.9 163.9,366.3 161.2,371.7 168.8,368.6 175.4,367.0 177.2,356.9 184.7,358.5 191.0,355.4 197.2,353.0 203.8,352.7 209.2,355.8 213.2,354.2 217.2,356.2 218.1,362.0 221.2,367.8 222.1,374.0 226.1,379.4 228.7,383.3 232.3,382.5 233.6,387.1 232.7,391.0 228.7,393.7 224.3,401.0 227.4,399.4 234.5,397.5 240.7,399.4 241.2,402.5 242.9,407.1 244.7,413.2 242.5,423.1 239.8,420.1 238.5,414.0 234.1,404.0 235.4,410.2 235.4,417.8 238.9,420.8 240.7,424.7 237.4,428.5 234.9,431.1 227.4,429.2 224.7,432.3 224.3,440.2 219.8,443.6 217.2,446.6 208.7,440.6 211.8,445.1 214.1,445.9 213.6,450.0 203.4,448.2 204.7,457.2 209.2,458.3 210.1,463.6 208.7,469.2 211.8,477.5 215.4,479.7 215.8,484.2 213.6,489.4 217.2,494.3 211.0,496.1 210.1,497.3 214.1,501.0 215.6,502.5 215.6,508.0 216.9,512.1 219.8,525.4 213.6,537.9 210.1,548.9 211.2,555.1 205.2,563.9 199.8,571.2 205.0,577.3 206.1,578.4 203.6,583.5 193.9,583.1 184.3,581.3 178.5,586.7 178.5,579.9 175.4,577.0 175.9,584.9 168.8,584.6 159.0,586.0 151.4,592.2 147.9,589.6 149.4,596.1 143.4,599.4 137.9,599.7 136.8,604.4 131.0,608.4 119.9,610.5 117.7,606.6 112.3,603.7 118.1,610.2 108.8,617.3 107.5,624.1 105.2,621.6 99.5,626.6 92.8,625.2 88.8,629.5 81.2,627.7 76.4,632.7 70.1,633.1 66.1,627.4 62.6,629.9 54.6,634.1 50.2,635.2 49.3,633.1 63.0,623.1 48.8,628.4 66.6,618.8 62.1,613.8 46.2,620.9 31.9,625.9 39.9,621.6 47.0,615.2 60.8,604.4 46.6,608.0 36.4,614.5 35.9,613.0 32.4,611.6 30.2,608.7 27.1,610.9 23.1,604.1 26.6,600.8 27.9,599.4 37.7,594.3 43.0,591.4 51.9,585.7 43.0,586.4 30.2,586.0 25.7,587.1 21.7,588.6 20.8,587.8 21.3,582.8 25.3,579.1 31.5,575.5 35.1,575.2 42.2,574.8 53.7,577.3 48.4,575.9 44.4,565.7 56.6,558.8 58.6,554.0 70.6,552.9 82.1,551.1 93.2,548.5 82.1,547.1 64.8,549.6 55.5,552.2 45.3,555.1 57.7,546.3 67.0,533.9 69.3,528.0 65.7,526.5 67.5,525.0 69.3,521.3 74.8,511.4 79.9,514.0 89.7,512.5 89.7,502.8 84.4,502.8 72.8,505.1 66.6,505.4 61.7,503.2 52.4,505.8 54.2,498.4 46.6,499.1 31.7,493.2 33.7,482.0 37.3,481.2 40.4,477.5 47.5,476.0 55.5,478.6 48.4,475.2 46.6,466.2 50.6,465.9 62.1,463.2 62.1,456.8 51.9,455.7 45.7,458.0 42.2,453.4 31.1,450.0 38.6,450.0 41.3,446.6 45.7,449.7 49.7,445.9 47.5,436.8 43.9,433.0 39.5,441.0 37.7,433.0 42.2,425.0 47.5,427.7 50.2,423.1 55.5,423.9 62.1,424.7 71.3,423.1 76.8,431.9 79.9,433.8 82.6,431.9 88.4,426.2 97.2,426.9 103.9,427.7 108.8,426.9 105.7,424.7 102.1,421.6 106.1,417.8 111.0,412.4 118.6,411.7 121.7,409.4 121.7,405.9 126.1,398.7 122.1,399.4 110.6,404.8 111.0,400.2 104.8,401.7 100.8,400.6 95.5,394.8 98.6,394.1 112.3,389.8 106.6,387.9 106.1,384.8 116.3,382.5 111.0,378.6 115.0,375.6 111.5,373.2 117.2,367.0 118.3,359.3 124.8,361.6 131.9,354.2 132.3,357.3 135.4,361.6 140.3,351.9 144.3,360.0 147.2,350.3 147.9,355.4 151.4,364.3 144.3,374.8 153.2,367.8 155.2,361.2 151.0,356.2 152.3,349.5 157.6,349.1" fill="#f2efe9" />
<polygon points="301.6,506.5 304.7,503.2 306.9,499.9 299.8,499.9 298.2,496.5 295.8,492.1 293.3,492.1 288.7,492.1 283.4,492.8 278.0,499.1 277.6,500.2 281.1,502.5 285.6,506.2 288.0,509.1 290.2,512.8 294.0,513.2 296.7,510.3" fill="#f2efe9" />
<polygon points="292.5,416.6 291.8,423.9 294.9,425.4 290.9,431.1 287.8,436.8 283.8,440.6 281.1,444.0 279.8,442.9 276.0,442.9 272.3,444.4 274.5,441.7 275.8,436.0 277.8,431.1 282.5,426.6 284.2,421.2" fill="#f2efe9" />
<polygon points="415.7,691.0 419.7,687.9 428.6,683.7 434.8,686.1 438.8,689.3 435.3,691.7 433.0,695.9 428.6,697.0 423.3,693.1 418.8,690.3" fill="#f2efe9" />
<polygon points="251.4,316.6 253.2,315.4 257.6,320.2 258.0,326.8 259.8,330.4 260.3,333.5 259.4,337.4 257.1,337.8 254.0,337.4 249.4,332.7 248.7,328.8 247.2,321.3 249.6,317.8" fill="#f2efe9" />
<polygon points="256.7,299.2 259.8,302.0 262.0,306.0 263.4,313.1 262.9,315.4 259.8,311.1 258.0,305.2" fill="#f2efe9" />
<polygon points="214.3,298.4 215.2,305.2 217.6,311.9 218.5,320.2 211.4,322.5 205.2,325.7 207.4,317.0 207.0,312.7 208.7,310.7 203.8,311.9 203.0,313.9 197.2,319.0 199.4,310.7 204.7,302.4 205.2,306.7 207.8,302.8 214.3,302.4" fill="#f2efe9" />
<polygon points="233.2,283.7 229.6,290.9 226.5,297.6 222.1,306.3 219.8,309.9 215.8,305.2 216.3,301.2 219.8,296.4 224.3,297.2 220.7,293.3 229.6,285.3" fill="#f2efe9" />
<polygon points="213.2,282.9 212.3,286.9 209.6,291.7 207.8,292.5 208.7,288.5 210.5,284.5" fill="#f2efe9" />
<polygon points="216.7,243.2 214.1,240.8 205.2,244.4 207.4,247.3 205.0,249.7 213.2,253.3 206.1,254.1 211.0,256.5 220.7,256.5 213.2,259.7 207.8,264.1 220.7,263.3 209.2,267.8 203.4,267.4 203.4,270.2 210.1,270.6 220.7,268.2 225.6,265.4 232.3,263.7 234.5,260.5 235.2,256.9 232.9,255.7 228.3,252.1 222.1,251.7" fill="#f2efe9" />
<polygon points="199.8,238.0 199.4,240.4 192.3,246.9 189.2,248.1 189.6,245.2 194.1,241.2" fill="#f2efe9" />
<polygon points="186.5,250.1 185.2,252.5 180.7,255.7 177.6,258.1 175.9,256.5 176.7,253.3 179.9,251.7 183.4,249.7" fill="#f2efe9" />
<polygon points="205.2,207.9 208.7,211.2 208.3,216.1 205.2,217.7 201.2,215.3 200.7,210.4" fill="#f2efe9" />
<polygon points="213.6,217.7 214.9,221.0 214.1,223.0 211.8,221.8 212.3,218.9" fill="#f2efe9" />
<polygon points="197.6,207.1 198.1,208.3 194.1,209.1 193.2,207.9" fill="#f2efe9" />
<polygon points="204.5,154.8 211.0,161.0 213.6,170.1 211.4,179.2 215.4,184.1 214.9,187.0 220.7,189.9 223.8,192.8 231.8,190.3 234.7,194.4 228.7,201.0 224.5,207.5 218.9,211.2 219.8,203.8 222.9,198.9 215.2,201.0 212.7,196.5 206.1,199.7 207.0,196.5 203.0,192.4 199.4,189.5 201.2,183.3 194.1,185.0 184.7,178.0 187.9,170.5 194.1,176.7 193.2,171.8 191.6,163.1 198.5,169.3 206.1,175.9 203.0,169.3 203.4,164.7" fill="#f2efe9" />
<polygon points="219.8,171.8 220.3,176.7 218.5,184.1 216.3,185.8 215.8,180.0 217.6,174.2" fill="#f2efe9" />
<polygon points="208.3,86.7 209.8,88.8 212.7,101.1 210.1,104.9 213.6,108.3 211.8,112.5 202.5,112.5 203.4,118.4 203.8,126.8 199.8,130.2 195.4,136.0 190.1,141.0 183.9,138.5 185.2,143.5 177.2,152.7 174.5,149.4 169.2,144.4 177.6,140.2 175.9,135.2 171.4,130.6 173.2,125.1 170.1,119.2 174.1,114.2 174.1,110.0 182.1,109.1 184.7,106.6 189.2,102.4 196.3,99.0 203.0,93.0" fill="#f2efe9" />
<polygon points="167.4,153.5 171.0,158.5 168.3,163.5 168.8,167.6 165.6,172.6 165.6,175.9 164.3,178.4 165.6,185.8 163.4,193.2 162.1,200.6 162.5,207.1 158.5,204.6 156.8,196.5 156.8,188.2 157.6,181.7 157.2,175.9 158.5,174.2 157.6,169.3 152.3,162.7 154.1,158.5 159.9,159.3 164.3,156.0" fill="#f2efe9" />
<polygon points="156.3,210.4 157.6,214.4 155.0,217.7 152.3,219.3 151.0,215.3 153.2,211.2" fill="#f2efe9" />
<polygon points="338.0,33.5 343.8,31.8 349.5,34.8 350.9,39.1 347.8,45.2 353.1,43.4 354.9,46.4 362.0,45.6 366.4,48.2 365.5,52.5 357.1,54.2 354.2,49.0 344.9,52.5 339.8,48.6 337.1,43.0 337.5,36.1" fill="#f2efe9" />
<polygon points="334.0,55.1 338.4,52.0 343.3,56.3 344.7,59.3 347.3,64.1 342.0,64.5 336.7,59.8" fill="#f2efe9" />
<polygon points="356.6,58.9 358.9,59.8 356.6,64.1 354.9,67.9 352.2,64.9 353.5,60.6" fill="#f2efe9" />
<polygon points="350.9,27.9 354.4,30.5 352.2,33.9 347.8,32.2" fill="#f2efe9" />
<polygon points="355.3,14.8 358.9,17.4 359.8,23.5 356.6,24.4 353.1,21.8 350.0,18.3" fill="#f2efe9" />
<polygon points="358.0,11.3 358.9,16.6 357.1,16.6 356.6,12.2" fill="#f2efe9" />
<polygon points="373.1,19.2 378.9,20.0 379.7,22.6 373.1,24.4 367.3,27.9 365.5,26.1 370.0,22.6" fill="#f2efe9" />
<polygon points="370.0,31.3 374.0,34.8 372.2,39.1 368.2,38.2 367.3,34.8" fill="#f2efe9" />
<polygon points="363.8,24.4 365.1,28.7 362.9,33.9 361.1,30.5" fill="#f2efe9" />
<polygon points="358.4,39.1 362.0,40.8 359.8,43.4 355.3,42.6" fill="#f2efe9" />
<polygon points="378.9,11.3 380.6,13.9 378.0,14.8 377.1,12.2" fill="#f2efe9" />
<polygon points="400.2,755.9 404.2,757.6 414.4,761.0 421.9,759.0 430.2,757.6 430.4,765.1 428.6,771.3 402.0,771.3 403.7,764.5 400.2,759.7" fill="#f2efe9" />
<polygon points="390.0,755.5 390.4,756.9 387.3,757.3 387.3,756.2" fill="#f2efe9" />
<polygon points="206.5,741.4 207.4,742.8 206.1,743.5 205.2,742.1" fill="#f2efe9" />
<polygon points="278.9,653.0 279.4,655.8 278.5,655.8 278.2,653.0" fill="#f2efe9" />
<polygon points="601.8,660.8 591.6,663.6 580.5,667.1 568.5,669.2 562.3,672.4 556.8,676.3 557.0,686.1 556.8,700.8 555.6,708.8 557.4,712.0 555.2,716.1 558.5,722.1 558.8,723.8 552.5,724.5 550.8,730.0 547.2,732.8 534.3,741.8 517.9,745.9 502.8,753.1 495.2,756.9 493.7,758.6 489.2,770.6 490.8,778.1 601.8,778.1" fill="#f2efe9" />
<polygon points="414.4,-2.7 415.3,-0.0 413.1,0.8 412.6,-1.8" fill="#f2efe9" />
<polygon points="207.4,347.6 212.3,349.1 211.4,350.7 207.4,348.8" fill="#f2efe9" />
<polygon points="31.1,450.0 39.9,451.2 42.2,453.4 44.4,457.2 45.3,451.9 41.3,446.6 36.8,448.2" fill="#f2efe9" />
<polygon points="106.1,370.9 108.8,373.2 107.0,374.0 105.7,371.7" fill="#f2efe9" />
<polygon points="49.7,511.0 56.8,513.2 58.2,516.2 54.6,515.4 50.2,513.2" fill="#f2efe9" />
<defs><clipPath id="lc"><polygon points="264.3,77.3 275.4,82.0 279.4,83.7 276.7,91.4 281.1,83.7 282.9,81.1 288.7,85.4 289.6,90.5 291.8,85.4 298.9,85.4 307.8,79.4 312.2,82.8 319.8,81.1 330.0,79.4 336.7,73.5 337.5,77.7 350.0,76.0 352.0,75.6 348.7,85.4 350.9,89.7 349.5,93.0 340.7,104.9 334.4,109.1 324.2,120.1 315.3,129.3 310.0,132.7 307.8,135.2 308.7,140.2 304.2,143.5 295.3,141.0 302.0,144.4 307.3,145.2 316.7,143.5 318.7,141.4 313.1,151.0 308.7,156.0 302.0,155.2 291.8,161.8 300.7,158.5 307.3,156.8 304.7,165.6 297.6,171.8 290.0,172.6 298.9,173.0 305.6,164.7 314.4,164.3 326.0,158.5 331.3,154.8 340.7,153.5 349.1,157.3 354.9,156.8 359.8,155.2 366.9,156.4 374.9,157.7 382.9,157.3 392.6,155.2 397.5,155.2 400.6,156.8 405.5,162.7 407.5,171.3 404.2,179.2 400.6,184.1 397.5,187.4 394.4,201.0 395.3,201.4 388.6,215.7 385.3,225.4 377.1,236.4 371.7,248.9 365.1,255.7 358.9,256.1 354.4,256.9 346.4,261.3 356.2,258.1 358.4,257.3 362.0,258.1 362.4,266.2 371.5,271.0 366.4,275.8 361.1,278.5 353.1,277.7 346.4,284.5 342.9,288.9 335.8,292.5 326.4,289.3 321.1,287.7 322.0,290.9 326.4,291.7 335.3,294.1 345.5,294.9 350.9,297.2 354.9,295.7 360.2,290.1 365.5,288.5 374.6,292.9 391.3,300.0 393.5,303.6 397.5,311.5 406.4,318.6 410.4,324.1 413.1,326.4 415.7,335.1 414.8,341.3 416.6,345.6 417.9,353.4 419.7,357.3 419.7,362.0 423.3,370.5 425.9,378.3 427.3,384.0 433.9,395.2 435.7,399.0 433.0,402.5 439.3,401.0 443.3,403.6 451.3,405.6 459.3,410.9 462.8,415.5 464.6,417.8 469.0,426.6 474.6,431.9 482.8,439.5 477.9,442.1 479.2,455.0 487.9,468.5 491.5,480.1 488.6,476.7 477.5,470.7 471.7,468.1 461.9,469.2 455.3,470.7 466.8,471.5 477.9,476.0 483.2,479.7 485.5,481.6 493.0,487.6 497.9,497.6 501.7,512.1 501.2,515.8 495.2,524.3 489.9,528.0 490.8,531.7 495.7,536.1 502.3,537.5 506.3,531.7 508.1,526.5 514.8,524.7 524.1,525.0 530.8,524.7 540.1,526.9 544.1,527.6 550.3,532.0 554.8,535.7 561.9,543.8 563.6,551.5 564.5,561.0 561.0,572.2 557.6,584.9 556.5,589.6 549.4,596.5 546.3,599.0 543.7,599.7 540.5,596.5 535.2,599.4 541.9,600.1 543.2,606.6 537.4,611.2 532.5,612.3 529.9,610.2 527.7,612.0 521.9,614.1 517.4,615.2 522.8,615.9 526.3,614.5 528.1,618.8 527.7,622.7 521.0,622.7 526.3,623.8 528.5,624.5 521.9,629.9 517.9,629.5 512.1,630.9 502.3,634.9 496.1,633.1 502.8,635.6 508.6,633.1 518.3,634.5 520.1,635.6 524.1,637.3 527.7,638.8 528.5,640.9 526.3,642.7 531.7,641.6 536.5,640.9 539.7,640.2 547.6,639.5 550.5,640.5 549.4,643.7 547.2,646.6 548.5,651.6 547.2,657.2 545.0,658.3 538.8,661.5 534.3,662.2 530.3,665.7 529.7,673.1 521.0,672.1 512.1,677.3 507.2,678.7 499.2,683.7 497.0,685.8 490.8,683.3 488.8,682.6 480.1,679.8 469.9,680.5 462.4,681.2 456.4,682.6 451.3,686.8 444.2,682.6 441.9,679.1 437.5,681.9 433.0,681.2 428.2,677.7 424.2,674.2 424.2,676.3 428.2,679.8 425.9,682.3 418.4,684.7 417.5,687.5 415.7,686.8 408.6,687.2 402.8,687.2 399.7,689.3 400.8,692.4 399.5,695.6 394.8,696.6 391.7,694.5 386.4,693.8 377.5,694.5 377.3,701.2 376.6,697.3 370.9,691.0 363.8,687.5 355.8,686.8 350.0,688.2 342.4,689.6 338.9,693.1 334.9,694.2 332.7,689.6 332.4,696.6 331.1,699.1 331.8,705.0 328.2,706.7 331.5,709.2 327.8,713.4 324.7,721.7 321.1,723.1 318.0,722.4 314.4,720.3 313.6,717.5 305.1,715.5 302.5,712.0 298.9,715.5 288.7,712.7 280.2,714.1 275.4,713.7 273.1,721.7 263.8,726.2 261.6,726.6 262.0,733.5 255.1,739.7 252.7,735.6 250.0,731.4 242.0,728.6 240.3,731.4 234.1,734.2 232.5,732.4 232.7,728.3 234.5,725.5 242.9,722.1 245.6,723.8 246.7,720.3 251.4,718.9 254.0,714.8 257.4,712.7 260.7,707.8 262.7,698.7 267.4,698.0 271.8,695.6 274.9,690.3 277.8,688.9 284.0,679.1 285.4,665.7 290.9,667.1 298.0,664.3 304.2,661.5 297.1,657.2 298.5,653.7 303.3,652.3 307.3,652.3 316.2,650.8 318.2,649.8 325.1,651.6 332.2,652.3 338.4,654.4 347.3,652.3 353.1,650.1 351.8,644.1 354.0,642.7 359.3,635.9 363.3,632.4 366.4,631.3 368.0,627.4 369.5,624.5 376.2,615.9 374.0,616.6 367.8,622.0 364.2,625.9 354.0,628.8 346.0,634.5 345.5,638.4 341.1,639.5 335.8,639.8 328.2,638.8 322.0,633.4 317.6,625.9 311.3,623.4 309.8,627.0 299.3,628.8 294.0,627.0 297.6,621.6 304.2,620.2 297.6,618.8 292.2,616.6 291.8,612.3 284.2,614.5 278.0,616.6 277.6,619.5 273.6,622.0 267.8,624.9 261.6,623.1 257.1,618.8 266.5,617.3 259.8,616.6 256.5,618.8 253.2,614.8 259.6,611.6 258.7,606.2 255.8,605.1 250.3,602.6 255.4,600.1 261.1,593.6 265.4,595.8 268.3,593.3 271.8,594.3 276.2,587.5 278.5,587.8 284.5,586.0 292.7,580.2 297.1,578.1 304.7,565.7 306.5,560.2 306.2,557.0 311.8,555.1 306.5,556.2 304.5,553.3 306.2,543.4 310.9,541.6 306.0,542.7 302.0,536.1 303.1,533.1 304.2,529.1 298.2,529.1 290.5,531.3 286.5,536.1 282.9,537.5 277.1,537.5 274.7,537.9 276.7,535.0 284.0,526.9 290.0,522.8 293.6,516.9 296.2,512.5 299.8,508.8 302.9,505.8 311.8,502.8 315.8,501.4 314.4,497.3 316.7,498.8 321.1,500.6 327.3,501.0 331.3,499.1 335.3,497.6 338.9,496.5 347.3,504.3 350.4,506.5 350.0,501.4 344.2,495.0 345.1,493.5 351.3,490.2 352.6,493.9 357.5,498.4 362.9,497.6 357.5,496.9 353.3,492.4 350.4,486.5 348.4,481.6 352.4,474.5 355.3,470.7 362.0,467.4 354.9,468.1 350.6,462.1 351.5,453.8 353.1,454.2 357.5,453.1 359.3,448.9 357.1,445.5 358.9,442.5 362.0,438.3 361.1,433.0 357.1,433.8 356.0,436.8 350.9,433.8 350.0,436.4 345.5,441.4 344.2,444.4 341.1,437.6 343.3,434.5 343.3,430.7 340.7,433.8 339.3,433.4 337.5,431.5 334.4,421.6 331.5,418.2 324.9,409.4 326.7,406.3 327.8,399.0 330.7,393.7 333.8,389.4 335.5,381.7 336.7,379.4 339.8,380.2 343.8,375.2 350.4,372.8 341.5,373.6 338.0,373.6 330.0,374.0 327.3,370.1 327.8,374.8 326.7,381.3 321.1,381.0 317.8,382.1 316.2,384.8 310.0,389.1 305.6,387.1 306.5,384.0 304.2,387.1 301.1,388.7 298.9,384.8 295.3,381.7 291.8,379.4 289.6,382.1 292.5,387.9 292.7,394.8 291.1,396.4 284.5,392.1 282.7,390.2 277.6,384.8 272.7,382.1 266.3,386.4 268.9,395.6 270.7,399.8 266.0,393.3 258.9,384.0 257.6,382.5 257.1,371.3 260.3,370.1 262.0,374.0 263.1,379.0 263.4,374.0 262.0,368.6 264.0,363.9 267.4,357.7 270.5,353.0 271.1,346.8 273.6,344.1 274.9,340.2 277.1,338.2 280.2,335.5 281.1,332.7 278.5,329.2 277.8,324.1 273.1,322.1 268.5,317.0 270.0,309.5 269.1,302.4 270.0,296.4 274.9,297.2 278.0,298.4 286.5,299.6 279.8,296.4 276.0,293.3 272.3,287.7 273.6,294.9 271.4,294.5 270.9,285.3 275.4,277.3 269.6,285.3 268.7,294.5 267.6,297.2 266.0,301.6 265.1,304.4 259.8,297.2 256.7,301.2 255.4,307.1 250.3,303.2 250.0,292.5 261.1,279.7 267.4,271.8 261.1,275.0 256.3,280.9 245.2,290.5 244.3,292.1 245.8,304.0 249.4,311.9 243.4,325.7 237.6,338.6 236.0,347.6 228.7,347.6 231.6,338.6 232.7,328.0 234.7,320.6 237.6,313.1 244.7,304.8 236.7,310.7 234.3,307.5 234.1,302.4 232.7,299.6 238.5,291.7 233.2,296.4 239.4,286.1 236.7,285.3 240.3,279.7 239.8,275.0 235.4,270.2 243.2,260.1 245.2,256.9 253.2,256.5 245.6,254.1 246.0,248.9 250.0,245.2 255.8,238.0 259.4,227.4 250.9,225.0 258.9,226.6 253.6,235.6 242.0,243.6 233.2,253.3 229.8,250.5 220.3,244.0 218.9,241.2 228.7,238.8 238.9,238.0 226.5,237.2 215.4,237.6 209.8,235.0 211.8,233.5 219.8,231.9 225.2,231.5 226.5,229.9 226.1,227.4 230.9,223.4 227.8,223.4 226.5,220.1 223.4,221.8 227.4,215.3 227.4,212.4 235.4,211.2 230.9,209.5 230.1,206.3 232.3,202.2 242.0,203.8 234.1,200.6 236.3,195.6 235.2,194.0 236.7,190.7 242.0,189.9 232.5,189.9 235.4,185.0 239.4,183.3 242.9,180.0 236.7,180.8 228.3,182.5 228.1,177.5 228.3,165.6 235.4,169.7 241.6,168.0 233.6,165.6 228.3,160.2 233.6,153.1 229.6,151.9 228.3,141.9 233.2,142.3 237.6,149.8 238.3,143.5 236.7,136.8 240.7,141.4 244.3,141.9 245.6,137.7 253.2,142.7 246.5,136.0 257.1,138.9 261.1,144.4 254.5,136.0 248.7,128.5 245.2,121.8 251.8,123.4 253.4,117.6 249.2,113.3 247.2,107.9 255.4,109.5 263.4,108.7 258.5,104.9 257.4,100.7 255.8,98.1 260.7,97.3 262.0,91.4 261.6,84.6"  /><polygon points="159.0,342.1 168.3,349.1 178.5,353.8 173.6,356.9 163.9,366.3 161.2,371.7 168.8,368.6 175.4,367.0 177.2,356.9 184.7,358.5 191.0,355.4 197.2,353.0 203.8,352.7 209.2,355.8 213.2,354.2 217.2,356.2 218.1,362.0 221.2,367.8 222.1,374.0 226.1,379.4 228.7,383.3 232.3,382.5 233.6,387.1 232.7,391.0 228.7,393.7 224.3,401.0 227.4,399.4 234.5,397.5 240.7,399.4 241.2,402.5 242.9,407.1 244.7,413.2 242.5,423.1 239.8,420.1 238.5,414.0 234.1,404.0 235.4,410.2 235.4,417.8 238.9,420.8 240.7,424.7 237.4,428.5 234.9,431.1 227.4,429.2 224.7,432.3 224.3,440.2 219.8,443.6 217.2,446.6 208.7,440.6 211.8,445.1 214.1,445.9 213.6,450.0 203.4,448.2 204.7,457.2 209.2,458.3 210.1,463.6 208.7,469.2 211.8,477.5 215.4,479.7 215.8,484.2 213.6,489.4 217.2,494.3 211.0,496.1 210.1,497.3 214.1,501.0 215.6,502.5 215.6,508.0 216.9,512.1 219.8,525.4 213.6,537.9 210.1,548.9 211.2,555.1 205.2,563.9 199.8,571.2 205.0,577.3 206.1,578.4 203.6,583.5 193.9,583.1 184.3,581.3 178.5,586.7 178.5,579.9 175.4,577.0 175.9,584.9 168.8,584.6 159.0,586.0 151.4,592.2 147.9,589.6 149.4,596.1 143.4,599.4 137.9,599.7 136.8,604.4 131.0,608.4 119.9,610.5 117.7,606.6 112.3,603.7 118.1,610.2 108.8,617.3 107.5,624.1 105.2,621.6 99.5,626.6 92.8,625.2 88.8,629.5 81.2,627.7 76.4,632.7 70.1,633.1 66.1,627.4 62.6,629.9 54.6,634.1 50.2,635.2 49.3,633.1 63.0,623.1 48.8,628.4 66.6,618.8 62.1,613.8 46.2,620.9 31.9,625.9 39.9,621.6 47.0,615.2 60.8,604.4 46.6,608.0 36.4,614.5 35.9,613.0 32.4,611.6 30.2,608.7 27.1,610.9 23.1,604.1 26.6,600.8 27.9,599.4 37.7,594.3 43.0,591.4 51.9,585.7 43.0,586.4 30.2,586.0 25.7,587.1 21.7,588.6 20.8,587.8 21.3,582.8 25.3,579.1 31.5,575.5 35.1,575.2 42.2,574.8 53.7,577.3 48.4,575.9 44.4,565.7 56.6,558.8 58.6,554.0 70.6,552.9 82.1,551.1 93.2,548.5 82.1,547.1 64.8,549.6 55.5,552.2 45.3,555.1 57.7,546.3 67.0,533.9 69.3,528.0 65.7,526.5 67.5,525.0 69.3,521.3 74.8,511.4 79.9,514.0 89.7,512.5 89.7,502.8 84.4,502.8 72.8,505.1 66.6,505.4 61.7,503.2 52.4,505.8 54.2,498.4 46.6,499.1 31.7,493.2 33.7,482.0 37.3,481.2 40.4,477.5 47.5,476.0 55.5,478.6 48.4,475.2 46.6,466.2 50.6,465.9 62.1,463.2 62.1,456.8 51.9,455.7 45.7,458.0 42.2,453.4 31.1,450.0 38.6,450.0 41.3,446.6 45.7,449.7 49.7,445.9 47.5,436.8 43.9,433.0 39.5,441.0 37.7,433.0 42.2,425.0 47.5,427.7 50.2,423.1 55.5,423.9 62.1,424.7 71.3,423.1 76.8,431.9 79.9,433.8 82.6,431.9 88.4,426.2 97.2,426.9 103.9,427.7 108.8,426.9 105.7,424.7 102.1,421.6 106.1,417.8 111.0,412.4 118.6,411.7 121.7,409.4 121.7,405.9 126.1,398.7 122.1,399.4 110.6,404.8 111.0,400.2 104.8,401.7 100.8,400.6 95.5,394.8 98.6,394.1 112.3,389.8 106.6,387.9 106.1,384.8 116.3,382.5 111.0,378.6 115.0,375.6 111.5,373.2 117.2,367.0 118.3,359.3 124.8,361.6 131.9,354.2 132.3,357.3 135.4,361.6 140.3,351.9 144.3,360.0 147.2,350.3 147.9,355.4 151.4,364.3 144.3,374.8 153.2,367.8 155.2,361.2 151.0,356.2 152.3,349.5 157.6,349.1"  /><polygon points="301.6,506.5 304.7,503.2 306.9,499.9 299.8,499.9 298.2,496.5 295.8,492.1 293.3,492.1 288.7,492.1 283.4,492.8 278.0,499.1 277.6,500.2 281.1,502.5 285.6,506.2 288.0,509.1 290.2,512.8 294.0,513.2 296.7,510.3"  /><polygon points="292.5,416.6 291.8,423.9 294.9,425.4 290.9,431.1 287.8,436.8 283.8,440.6 281.1,444.0 279.8,442.9 276.0,442.9 272.3,444.4 274.5,441.7 275.8,436.0 277.8,431.1 282.5,426.6 284.2,421.2"  /><polygon points="415.7,691.0 419.7,687.9 428.6,683.7 434.8,686.1 438.8,689.3 435.3,691.7 433.0,695.9 428.6,697.0 423.3,693.1 418.8,690.3"  /><polygon points="251.4,316.6 253.2,315.4 257.6,320.2 258.0,326.8 259.8,330.4 260.3,333.5 259.4,337.4 257.1,337.8 254.0,337.4 249.4,332.7 248.7,328.8 247.2,321.3 249.6,317.8"  /><polygon points="256.7,299.2 259.8,302.0 262.0,306.0 263.4,313.1 262.9,315.4 259.8,311.1 258.0,305.2"  /><polygon points="214.3,298.4 215.2,305.2 217.6,311.9 218.5,320.2 211.4,322.5 205.2,325.7 207.4,317.0 207.0,312.7 208.7,310.7 203.8,311.9 203.0,313.9 197.2,319.0 199.4,310.7 204.7,302.4 205.2,306.7 207.8,302.8 214.3,302.4"  /><polygon points="233.2,283.7 229.6,290.9 226.5,297.6 222.1,306.3 219.8,309.9 215.8,305.2 216.3,301.2 219.8,296.4 224.3,297.2 220.7,293.3 229.6,285.3"  /><polygon points="213.2,282.9 212.3,286.9 209.6,291.7 207.8,292.5 208.7,288.5 210.5,284.5"  /><polygon points="216.7,243.2 214.1,240.8 205.2,244.4 207.4,247.3 205.0,249.7 213.2,253.3 206.1,254.1 211.0,256.5 220.7,256.5 213.2,259.7 207.8,264.1 220.7,263.3 209.2,267.8 203.4,267.4 203.4,270.2 210.1,270.6 220.7,268.2 225.6,265.4 232.3,263.7 234.5,260.5 235.2,256.9 232.9,255.7 228.3,252.1 222.1,251.7"  /><polygon points="199.8,238.0 199.4,240.4 192.3,246.9 189.2,248.1 189.6,245.2 194.1,241.2"  /><polygon points="186.5,250.1 185.2,252.5 180.7,255.7 177.6,258.1 175.9,256.5 176.7,253.3 179.9,251.7 183.4,249.7"  /><polygon points="205.2,207.9 208.7,211.2 208.3,216.1 205.2,217.7 201.2,215.3 200.7,210.4"  /><polygon points="213.6,217.7 214.9,221.0 214.1,223.0 211.8,221.8 212.3,218.9"  /><polygon points="197.6,207.1 198.1,208.3 194.1,209.1 193.2,207.9"  /><polygon points="204.5,154.8 211.0,161.0 213.6,170.1 211.4,179.2 215.4,184.1 214.9,187.0 220.7,189.9 223.8,192.8 231.8,190.3 234.7,194.4 228.7,201.0 224.5,207.5 218.9,211.2 219.8,203.8 222.9,198.9 215.2,201.0 212.7,196.5 206.1,199.7 207.0,196.5 203.0,192.4 199.4,189.5 201.2,183.3 194.1,185.0 184.7,178.0 187.9,170.5 194.1,176.7 193.2,171.8 191.6,163.1 198.5,169.3 206.1,175.9 203.0,169.3 203.4,164.7"  /><polygon points="219.8,171.8 220.3,176.7 218.5,184.1 216.3,185.8 215.8,180.0 217.6,174.2"  /><polygon points="208.3,86.7 209.8,88.8 212.7,101.1 210.1,104.9 213.6,108.3 211.8,112.5 202.5,112.5 203.4,118.4 203.8,126.8 199.8,130.2 195.4,136.0 190.1,141.0 183.9,138.5 185.2,143.5 177.2,152.7 174.5,149.4 169.2,144.4 177.6,140.2 175.9,135.2 171.4,130.6 173.2,125.1 170.1,119.2 174.1,114.2 174.1,110.0 182.1,109.1 184.7,106.6 189.2,102.4 196.3,99.0 203.0,93.0"  /><polygon points="167.4,153.5 171.0,158.5 168.3,163.5 168.8,167.6 165.6,172.6 165.6,175.9 164.3,178.4 165.6,185.8 163.4,193.2 162.1,200.6 162.5,207.1 158.5,204.6 156.8,196.5 156.8,188.2 157.6,181.7 157.2,175.9 158.5,174.2 157.6,169.3 152.3,162.7 154.1,158.5 159.9,159.3 164.3,156.0"  /><polygon points="156.3,210.4 157.6,214.4 155.0,217.7 152.3,219.3 151.0,215.3 153.2,211.2"  /><polygon points="338.0,33.5 343.8,31.8 349.5,34.8 350.9,39.1 347.8,45.2 353.1,43.4 354.9,46.4 362.0,45.6 366.4,48.2 365.5,52.5 357.1,54.2 354.2,49.0 344.9,52.5 339.8,48.6 337.1,43.0 337.5,36.1"  /><polygon points="334.0,55.1 338.4,52.0 343.3,56.3 344.7,59.3 347.3,64.1 342.0,64.5 336.7,59.8"  /><polygon points="356.6,58.9 358.9,59.8 356.6,64.1 354.9,67.9 352.2,64.9 353.5,60.6"  /><polygon points="350.9,27.9 354.4,30.5 352.2,33.9 347.8,32.2"  /><polygon points="355.3,14.8 358.9,17.4 359.8,23.5 356.6,24.4 353.1,21.8 350.0,18.3"  /><polygon points="358.0,11.3 358.9,16.6 357.1,16.6 356.6,12.2"  /><polygon points="373.1,19.2 378.9,20.0 379.7,22.6 373.1,24.4 367.3,27.9 365.5,26.1 370.0,22.6"  /><polygon points="370.0,31.3 374.0,34.8 372.2,39.1 368.2,38.2 367.3,34.8"  /><polygon points="363.8,24.4 365.1,28.7 362.9,33.9 361.1,30.5"  /><polygon points="358.4,39.1 362.0,40.8 359.8,43.4 355.3,42.6"  /><polygon points="378.9,11.3 380.6,13.9 378.0,14.8 377.1,12.2"  /><polygon points="400.2,755.9 404.2,757.6 414.4,761.0 421.9,759.0 430.2,757.6 430.4,765.1 428.6,771.3 402.0,771.3 403.7,764.5 400.2,759.7"  /><polygon points="390.0,755.5 390.4,756.9 387.3,757.3 387.3,756.2"  /><polygon points="206.5,741.4 207.4,742.8 206.1,743.5 205.2,742.1"  /><polygon points="278.9,653.0 279.4,655.8 278.5,655.8 278.2,653.0"  /><polygon points="601.8,660.8 591.6,663.6 580.5,667.1 568.5,669.2 562.3,672.4 556.8,676.3 557.0,686.1 556.8,700.8 555.6,708.8 557.4,712.0 555.2,716.1 558.5,722.1 558.8,723.8 552.5,724.5 550.8,730.0 547.2,732.8 534.3,741.8 517.9,745.9 502.8,753.1 495.2,756.9 493.7,758.6 489.2,770.6 490.8,778.1 601.8,778.1"  /><polygon points="414.4,-2.7 415.3,-0.0 413.1,0.8 412.6,-1.8"  /><polygon points="207.4,347.6 212.3,349.1 211.4,350.7 207.4,348.8"  /><polygon points="31.1,450.0 39.9,451.2 42.2,453.4 44.4,457.2 45.3,451.9 41.3,446.6 36.8,448.2"  /><polygon points="106.1,370.9 108.8,373.2 107.0,374.0 105.7,371.7"  /><polygon points="49.7,511.0 56.8,513.2 58.2,516.2 54.6,515.4 50.2,513.2"  /></clipPath><filter id="tex" x="0" y="0" width="100%" height="100%"><feTurbulence type="fractalNoise" baseFrequency="0.1" numOctaves="3" seed="11" result="n"/><feColorMatrix in="n" type="matrix" values="0 0 0 0 0.80  0 0 0 0 0.88  0 0 0 0 0.68  4.2 0 0 0 -1.85" result="g"/><feComposite in="g" in2="SourceGraphic" operator="in"/></filter><filter id="bl"><feGaussianBlur stdDeviation="4"/></filter><filter id="bl2"><feGaussianBlur stdDeviation="1.6"/></filter></defs><g clip-path="url(#lc)"><g filter="url(#bl)"><ellipse cx="268.7" cy="196.5" rx="38" ry="45" fill="#d3e3b8" opacity="0.33"/><ellipse cx="282.0" cy="121.8" rx="30" ry="25" fill="#d3e3b8" opacity="0.30"/><ellipse cx="322.0" cy="212.8" rx="28" ry="22" fill="#d3e3b8" opacity="0.30"/><ellipse cx="282.0" cy="245.2" rx="30" ry="22" fill="#d3e3b8" opacity="0.30"/><ellipse cx="250.9" cy="269.4" rx="15" ry="22" fill="#d3e3b8" opacity="0.27"/><ellipse cx="206.5" cy="188.2" rx="14" ry="12" fill="#d3e3b8" opacity="0.21"/><ellipse cx="188.7" cy="121.8" rx="12" ry="14" fill="#d3e3b8" opacity="0.18"/><ellipse cx="326.4" cy="348.4" rx="40" ry="16" fill="#d3e3b8" opacity="0.27"/><ellipse cx="290.9" cy="363.9" rx="20" ry="14" fill="#d3e3b8" opacity="0.27"/><ellipse cx="348.7" cy="410.2" rx="14" ry="12" fill="#d3e3b8" opacity="0.30"/><ellipse cx="388.6" cy="417.8" rx="14" ry="30" fill="#d3e3b8" opacity="0.24"/><ellipse cx="384.2" cy="348.4" rx="16" ry="12" fill="#d3e3b8" opacity="0.27"/><ellipse cx="406.4" cy="500.6" rx="9" ry="14" fill="#d3e3b8" opacity="0.24"/><ellipse cx="317.6" cy="530.2" rx="20" ry="20" fill="#d3e3b8" opacity="0.30"/><ellipse cx="326.4" cy="574.1" rx="18" ry="22" fill="#d3e3b8" opacity="0.30"/><ellipse cx="330.9" cy="603.0" rx="18" ry="8" fill="#d3e3b8" opacity="0.27"/><ellipse cx="313.1" cy="695.2" rx="8" ry="7" fill="#d3e3b8" opacity="0.27"/><ellipse cx="322.0" cy="656.5" rx="9" ry="5" fill="#d3e3b8" opacity="0.24"/><ellipse cx="446.4" cy="421.6" rx="12" ry="7" fill="#d3e3b8" opacity="0.24"/><ellipse cx="202.1" cy="522.8" rx="9" ry="16" fill="#d3e3b8" opacity="0.27"/><ellipse cx="131.0" cy="379.4" rx="22" ry="18" fill="#d3e3b8" opacity="0.27"/><ellipse cx="59.9" cy="478.2" rx="18" ry="16" fill="#d3e3b8" opacity="0.27"/><ellipse cx="64.4" cy="440.6" rx="18" ry="12" fill="#d3e3b8" opacity="0.27"/><ellipse cx="51.0" cy="595.8" rx="22" ry="12" fill="#d3e3b8" opacity="0.27"/><ellipse cx="64.4" cy="610.2" rx="16" ry="10" fill="#d3e3b8" opacity="0.24"/><ellipse cx="131.0" cy="566.8" rx="18" ry="8" fill="#d3e3b8" opacity="0.21"/><ellipse cx="108.8" cy="515.4" rx="10" ry="10" fill="#d3e3b8" opacity="0.18"/><ellipse cx="179.9" cy="387.1" rx="12" ry="10" fill="#d3e3b8" opacity="0.21"/><ellipse cx="211.0" cy="371.7" rx="8" ry="12" fill="#d3e3b8" opacity="0.21"/><ellipse cx="219.8" cy="433.0" rx="7" ry="6" fill="#d3e3b8" opacity="0.24"/><ellipse cx="135.4" cy="544.9" rx="12" ry="8" fill="#d3e3b8" opacity="0.18"/><ellipse cx="144.3" cy="588.6" rx="16" ry="6" fill="#d3e3b8" opacity="0.18"/><ellipse cx="517.4" cy="563.2" rx="12" ry="6" fill="#d3e3b8" opacity="0.21"/><ellipse cx="486.4" cy="660.1" rx="20" ry="5" fill="#d3e3b8" opacity="0.18"/><ellipse cx="415.3" cy="677.7" rx="8" ry="5" fill="#d3e3b8" opacity="0.24"/><ellipse cx="459.7" cy="645.9" rx="10" ry="5" fill="#d3e3b8" opacity="0.18"/><ellipse cx="446.4" cy="508.0" rx="8" ry="8" fill="#d3e3b8" opacity="0.15"/><ellipse cx="264.3" cy="301.2" rx="16" ry="22" fill="#d3e3b8" opacity="0.24"/><ellipse cx="233.2" cy="237.2" rx="14" ry="10" fill="#d3e3b8" opacity="0.24"/><ellipse cx="246.5" cy="163.5" rx="14" ry="14" fill="#d3e3b8" opacity="0.24"/><ellipse cx="219.8" cy="257.3" rx="10" ry="8" fill="#d3e3b8" opacity="0.21"/><ellipse cx="211.0" cy="313.1" rx="6" ry="7" fill="#d3e3b8" opacity="0.18"/><ellipse cx="253.2" cy="324.9" rx="5" ry="8" fill="#d3e3b8" opacity="0.24"/><ellipse cx="353.1" cy="163.5" rx="20" ry="8" fill="#d3e3b8" opacity="0.18"/><ellipse cx="366.4" cy="196.5" rx="14" ry="12" fill="#d3e3b8" opacity="0.18"/><ellipse cx="530.8" cy="764.5" rx="30" ry="20" fill="#d3e3b8" opacity="0.18"/><ellipse cx="570.7" cy="709.2" rx="14" ry="20" fill="#d3e3b8" opacity="0.15"/></g><g filter="url(#bl2)"><ellipse cx="348.7" cy="412.4" rx="13" ry="12" fill="#cbe0ae" opacity="0.55"/><ellipse cx="390.8" cy="429.2" rx="12" ry="10" fill="#cbe0ae" opacity="0.55"/><ellipse cx="446.4" cy="419.3" rx="12" ry="6" fill="#cbe0ae" opacity="0.55"/><ellipse cx="384.2" cy="348.4" rx="9" ry="14" fill="#cbe0ae" opacity="0.55"/><ellipse cx="406.4" cy="500.6" rx="8" ry="12" fill="#cbe0ae" opacity="0.55"/><ellipse cx="315.3" cy="530.2" rx="10" ry="16" fill="#cbe0ae" opacity="0.55"/><ellipse cx="333.1" cy="604.4" rx="18" ry="5" fill="#cbe0ae" opacity="0.55"/><ellipse cx="324.2" cy="656.5" rx="9" ry="4" fill="#cbe0ae" opacity="0.55"/><ellipse cx="313.1" cy="696.6" rx="7" ry="7" fill="#cbe0ae" opacity="0.55"/><ellipse cx="288.7" cy="363.9" rx="10" ry="10" fill="#cbe0ae" opacity="0.55"/><ellipse cx="284.2" cy="273.4" rx="12" ry="12" fill="#cbe0ae" opacity="0.55"/><ellipse cx="326.4" cy="208.7" rx="20" ry="14" fill="#cbe0ae" opacity="0.55"/><ellipse cx="415.3" cy="676.3" rx="5" ry="4" fill="#cbe0ae" opacity="0.55"/><ellipse cx="464.1" cy="672.1" rx="22" ry="3" fill="#cbe0ae" opacity="0.55"/><ellipse cx="204.3" cy="519.1" rx="5" ry="10" fill="#cbe0ae" opacity="0.55"/><ellipse cx="51.0" cy="485.7" rx="8" ry="5" fill="#cbe0ae" opacity="0.55"/><ellipse cx="59.9" cy="595.8" rx="8" ry="5" fill="#cbe0ae" opacity="0.55"/><ellipse cx="131.0" cy="371.7" rx="6" ry="5" fill="#cbe0ae" opacity="0.55"/><ellipse cx="555.2" cy="548.5" rx="5" ry="6" fill="#cbe0ae" opacity="0.55"/></g></g><g filter="url(#tex)"><polygon points="264.3,77.3 275.4,82.0 279.4,83.7 276.7,91.4 281.1,83.7 282.9,81.1 288.7,85.4 289.6,90.5 291.8,85.4 298.9,85.4 307.8,79.4 312.2,82.8 319.8,81.1 330.0,79.4 336.7,73.5 337.5,77.7 350.0,76.0 352.0,75.6 348.7,85.4 350.9,89.7 349.5,93.0 340.7,104.9 334.4,109.1 324.2,120.1 315.3,129.3 310.0,132.7 307.8,135.2 308.7,140.2 304.2,143.5 295.3,141.0 302.0,144.4 307.3,145.2 316.7,143.5 318.7,141.4 313.1,151.0 308.7,156.0 302.0,155.2 291.8,161.8 300.7,158.5 307.3,156.8 304.7,165.6 297.6,171.8 290.0,172.6 298.9,173.0 305.6,164.7 314.4,164.3 326.0,158.5 331.3,154.8 340.7,153.5 349.1,157.3 354.9,156.8 359.8,155.2 366.9,156.4 374.9,157.7 382.9,157.3 392.6,155.2 397.5,155.2 400.6,156.8 405.5,162.7 407.5,171.3 404.2,179.2 400.6,184.1 397.5,187.4 394.4,201.0 395.3,201.4 388.6,215.7 385.3,225.4 377.1,236.4 371.7,248.9 365.1,255.7 358.9,256.1 354.4,256.9 346.4,261.3 356.2,258.1 358.4,257.3 362.0,258.1 362.4,266.2 371.5,271.0 366.4,275.8 361.1,278.5 353.1,277.7 346.4,284.5 342.9,288.9 335.8,292.5 326.4,289.3 321.1,287.7 322.0,290.9 326.4,291.7 335.3,294.1 345.5,294.9 350.9,297.2 354.9,295.7 360.2,290.1 365.5,288.5 374.6,292.9 391.3,300.0 393.5,303.6 397.5,311.5 406.4,318.6 410.4,324.1 413.1,326.4 415.7,335.1 414.8,341.3 416.6,345.6 417.9,353.4 419.7,357.3 419.7,362.0 423.3,370.5 425.9,378.3 427.3,384.0 433.9,395.2 435.7,399.0 433.0,402.5 439.3,401.0 443.3,403.6 451.3,405.6 459.3,410.9 462.8,415.5 464.6,417.8 469.0,426.6 474.6,431.9 482.8,439.5 477.9,442.1 479.2,455.0 487.9,468.5 491.5,480.1 488.6,476.7 477.5,470.7 471.7,468.1 461.9,469.2 455.3,470.7 466.8,471.5 477.9,476.0 483.2,479.7 485.5,481.6 493.0,487.6 497.9,497.6 501.7,512.1 501.2,515.8 495.2,524.3 489.9,528.0 490.8,531.7 495.7,536.1 502.3,537.5 506.3,531.7 508.1,526.5 514.8,524.7 524.1,525.0 530.8,524.7 540.1,526.9 544.1,527.6 550.3,532.0 554.8,535.7 561.9,543.8 563.6,551.5 564.5,561.0 561.0,572.2 557.6,584.9 556.5,589.6 549.4,596.5 546.3,599.0 543.7,599.7 540.5,596.5 535.2,599.4 541.9,600.1 543.2,606.6 537.4,611.2 532.5,612.3 529.9,610.2 527.7,612.0 521.9,614.1 517.4,615.2 522.8,615.9 526.3,614.5 528.1,618.8 527.7,622.7 521.0,622.7 526.3,623.8 528.5,624.5 521.9,629.9 517.9,629.5 512.1,630.9 502.3,634.9 496.1,633.1 502.8,635.6 508.6,633.1 518.3,634.5 520.1,635.6 524.1,637.3 527.7,638.8 528.5,640.9 526.3,642.7 531.7,641.6 536.5,640.9 539.7,640.2 547.6,639.5 550.5,640.5 549.4,643.7 547.2,646.6 548.5,651.6 547.2,657.2 545.0,658.3 538.8,661.5 534.3,662.2 530.3,665.7 529.7,673.1 521.0,672.1 512.1,677.3 507.2,678.7 499.2,683.7 497.0,685.8 490.8,683.3 488.8,682.6 480.1,679.8 469.9,680.5 462.4,681.2 456.4,682.6 451.3,686.8 444.2,682.6 441.9,679.1 437.5,681.9 433.0,681.2 428.2,677.7 424.2,674.2 424.2,676.3 428.2,679.8 425.9,682.3 418.4,684.7 417.5,687.5 415.7,686.8 408.6,687.2 402.8,687.2 399.7,689.3 400.8,692.4 399.5,695.6 394.8,696.6 391.7,694.5 386.4,693.8 377.5,694.5 377.3,701.2 376.6,697.3 370.9,691.0 363.8,687.5 355.8,686.8 350.0,688.2 342.4,689.6 338.9,693.1 334.9,694.2 332.7,689.6 332.4,696.6 331.1,699.1 331.8,705.0 328.2,706.7 331.5,709.2 327.8,713.4 324.7,721.7 321.1,723.1 318.0,722.4 314.4,720.3 313.6,717.5 305.1,715.5 302.5,712.0 298.9,715.5 288.7,712.7 280.2,714.1 275.4,713.7 273.1,721.7 263.8,726.2 261.6,726.6 262.0,733.5 255.1,739.7 252.7,735.6 250.0,731.4 242.0,728.6 240.3,731.4 234.1,734.2 232.5,732.4 232.7,728.3 234.5,725.5 242.9,722.1 245.6,723.8 246.7,720.3 251.4,718.9 254.0,714.8 257.4,712.7 260.7,707.8 262.7,698.7 267.4,698.0 271.8,695.6 274.9,690.3 277.8,688.9 284.0,679.1 285.4,665.7 290.9,667.1 298.0,664.3 304.2,661.5 297.1,657.2 298.5,653.7 303.3,652.3 307.3,652.3 316.2,650.8 318.2,649.8 325.1,651.6 332.2,652.3 338.4,654.4 347.3,652.3 353.1,650.1 351.8,644.1 354.0,642.7 359.3,635.9 363.3,632.4 366.4,631.3 368.0,627.4 369.5,624.5 376.2,615.9 374.0,616.6 367.8,622.0 364.2,625.9 354.0,628.8 346.0,634.5 345.5,638.4 341.1,639.5 335.8,639.8 328.2,638.8 322.0,633.4 317.6,625.9 311.3,623.4 309.8,627.0 299.3,628.8 294.0,627.0 297.6,621.6 304.2,620.2 297.6,618.8 292.2,616.6 291.8,612.3 284.2,614.5 278.0,616.6 277.6,619.5 273.6,622.0 267.8,624.9 261.6,623.1 257.1,618.8 266.5,617.3 259.8,616.6 256.5,618.8 253.2,614.8 259.6,611.6 258.7,606.2 255.8,605.1 250.3,602.6 255.4,600.1 261.1,593.6 265.4,595.8 268.3,593.3 271.8,594.3 276.2,587.5 278.5,587.8 284.5,586.0 292.7,580.2 297.1,578.1 304.7,565.7 306.5,560.2 306.2,557.0 311.8,555.1 306.5,556.2 304.5,553.3 306.2,543.4 310.9,541.6 306.0,542.7 302.0,536.1 303.1,533.1 304.2,529.1 298.2,529.1 290.5,531.3 286.5,536.1 282.9,537.5 277.1,537.5 274.7,537.9 276.7,535.0 284.0,526.9 290.0,522.8 293.6,516.9 296.2,512.5 299.8,508.8 302.9,505.8 311.8,502.8 315.8,501.4 314.4,497.3 316.7,498.8 321.1,500.6 327.3,501.0 331.3,499.1 335.3,497.6 338.9,496.5 347.3,504.3 350.4,506.5 350.0,501.4 344.2,495.0 345.1,493.5 351.3,490.2 352.6,493.9 357.5,498.4 362.9,497.6 357.5,496.9 353.3,492.4 350.4,486.5 348.4,481.6 352.4,474.5 355.3,470.7 362.0,467.4 354.9,468.1 350.6,462.1 351.5,453.8 353.1,454.2 357.5,453.1 359.3,448.9 357.1,445.5 358.9,442.5 362.0,438.3 361.1,433.0 357.1,433.8 356.0,436.8 350.9,433.8 350.0,436.4 345.5,441.4 344.2,444.4 341.1,437.6 343.3,434.5 343.3,430.7 340.7,433.8 339.3,433.4 337.5,431.5 334.4,421.6 331.5,418.2 324.9,409.4 326.7,406.3 327.8,399.0 330.7,393.7 333.8,389.4 335.5,381.7 336.7,379.4 339.8,380.2 343.8,375.2 350.4,372.8 341.5,373.6 338.0,373.6 330.0,374.0 327.3,370.1 327.8,374.8 326.7,381.3 321.1,381.0 317.8,382.1 316.2,384.8 310.0,389.1 305.6,387.1 306.5,384.0 304.2,387.1 301.1,388.7 298.9,384.8 295.3,381.7 291.8,379.4 289.6,382.1 292.5,387.9 292.7,394.8 291.1,396.4 284.5,392.1 282.7,390.2 277.6,384.8 272.7,382.1 266.3,386.4 268.9,395.6 270.7,399.8 266.0,393.3 258.9,384.0 257.6,382.5 257.1,371.3 260.3,370.1 262.0,374.0 263.1,379.0 263.4,374.0 262.0,368.6 264.0,363.9 267.4,357.7 270.5,353.0 271.1,346.8 273.6,344.1 274.9,340.2 277.1,338.2 280.2,335.5 281.1,332.7 278.5,329.2 277.8,324.1 273.1,322.1 268.5,317.0 270.0,309.5 269.1,302.4 270.0,296.4 274.9,297.2 278.0,298.4 286.5,299.6 279.8,296.4 276.0,293.3 272.3,287.7 273.6,294.9 271.4,294.5 270.9,285.3 275.4,277.3 269.6,285.3 268.7,294.5 267.6,297.2 266.0,301.6 265.1,304.4 259.8,297.2 256.7,301.2 255.4,307.1 250.3,303.2 250.0,292.5 261.1,279.7 267.4,271.8 261.1,275.0 256.3,280.9 245.2,290.5 244.3,292.1 245.8,304.0 249.4,311.9 243.4,325.7 237.6,338.6 236.0,347.6 228.7,347.6 231.6,338.6 232.7,328.0 234.7,320.6 237.6,313.1 244.7,304.8 236.7,310.7 234.3,307.5 234.1,302.4 232.7,299.6 238.5,291.7 233.2,296.4 239.4,286.1 236.7,285.3 240.3,279.7 239.8,275.0 235.4,270.2 243.2,260.1 245.2,256.9 253.2,256.5 245.6,254.1 246.0,248.9 250.0,245.2 255.8,238.0 259.4,227.4 250.9,225.0 258.9,226.6 253.6,235.6 242.0,243.6 233.2,253.3 229.8,250.5 220.3,244.0 218.9,241.2 228.7,238.8 238.9,238.0 226.5,237.2 215.4,237.6 209.8,235.0 211.8,233.5 219.8,231.9 225.2,231.5 226.5,229.9 226.1,227.4 230.9,223.4 227.8,223.4 226.5,220.1 223.4,221.8 227.4,215.3 227.4,212.4 235.4,211.2 230.9,209.5 230.1,206.3 232.3,202.2 242.0,203.8 234.1,200.6 236.3,195.6 235.2,194.0 236.7,190.7 242.0,189.9 232.5,189.9 235.4,185.0 239.4,183.3 242.9,180.0 236.7,180.8 228.3,182.5 228.1,177.5 228.3,165.6 235.4,169.7 241.6,168.0 233.6,165.6 228.3,160.2 233.6,153.1 229.6,151.9 228.3,141.9 233.2,142.3 237.6,149.8 238.3,143.5 236.7,136.8 240.7,141.4 244.3,141.9 245.6,137.7 253.2,142.7 246.5,136.0 257.1,138.9 261.1,144.4 254.5,136.0 248.7,128.5 245.2,121.8 251.8,123.4 253.4,117.6 249.2,113.3 247.2,107.9 255.4,109.5 263.4,108.7 258.5,104.9 257.4,100.7 255.8,98.1 260.7,97.3 262.0,91.4 261.6,84.6" fill="#f2efe9" /><polygon points="159.0,342.1 168.3,349.1 178.5,353.8 173.6,356.9 163.9,366.3 161.2,371.7 168.8,368.6 175.4,367.0 177.2,356.9 184.7,358.5 191.0,355.4 197.2,353.0 203.8,352.7 209.2,355.8 213.2,354.2 217.2,356.2 218.1,362.0 221.2,367.8 222.1,374.0 226.1,379.4 228.7,383.3 232.3,382.5 233.6,387.1 232.7,391.0 228.7,393.7 224.3,401.0 227.4,399.4 234.5,397.5 240.7,399.4 241.2,402.5 242.9,407.1 244.7,413.2 242.5,423.1 239.8,420.1 238.5,414.0 234.1,404.0 235.4,410.2 235.4,417.8 238.9,420.8 240.7,424.7 237.4,428.5 234.9,431.1 227.4,429.2 224.7,432.3 224.3,440.2 219.8,443.6 217.2,446.6 208.7,440.6 211.8,445.1 214.1,445.9 213.6,450.0 203.4,448.2 204.7,457.2 209.2,458.3 210.1,463.6 208.7,469.2 211.8,477.5 215.4,479.7 215.8,484.2 213.6,489.4 217.2,494.3 211.0,496.1 210.1,497.3 214.1,501.0 215.6,502.5 215.6,508.0 216.9,512.1 219.8,525.4 213.6,537.9 210.1,548.9 211.2,555.1 205.2,563.9 199.8,571.2 205.0,577.3 206.1,578.4 203.6,583.5 193.9,583.1 184.3,581.3 178.5,586.7 178.5,579.9 175.4,577.0 175.9,584.9 168.8,584.6 159.0,586.0 151.4,592.2 147.9,589.6 149.4,596.1 143.4,599.4 137.9,599.7 136.8,604.4 131.0,608.4 119.9,610.5 117.7,606.6 112.3,603.7 118.1,610.2 108.8,617.3 107.5,624.1 105.2,621.6 99.5,626.6 92.8,625.2 88.8,629.5 81.2,627.7 76.4,632.7 70.1,633.1 66.1,627.4 62.6,629.9 54.6,634.1 50.2,635.2 49.3,633.1 63.0,623.1 48.8,628.4 66.6,618.8 62.1,613.8 46.2,620.9 31.9,625.9 39.9,621.6 47.0,615.2 60.8,604.4 46.6,608.0 36.4,614.5 35.9,613.0 32.4,611.6 30.2,608.7 27.1,610.9 23.1,604.1 26.6,600.8 27.9,599.4 37.7,594.3 43.0,591.4 51.9,585.7 43.0,586.4 30.2,586.0 25.7,587.1 21.7,588.6 20.8,587.8 21.3,582.8 25.3,579.1 31.5,575.5 35.1,575.2 42.2,574.8 53.7,577.3 48.4,575.9 44.4,565.7 56.6,558.8 58.6,554.0 70.6,552.9 82.1,551.1 93.2,548.5 82.1,547.1 64.8,549.6 55.5,552.2 45.3,555.1 57.7,546.3 67.0,533.9 69.3,528.0 65.7,526.5 67.5,525.0 69.3,521.3 74.8,511.4 79.9,514.0 89.7,512.5 89.7,502.8 84.4,502.8 72.8,505.1 66.6,505.4 61.7,503.2 52.4,505.8 54.2,498.4 46.6,499.1 31.7,493.2 33.7,482.0 37.3,481.2 40.4,477.5 47.5,476.0 55.5,478.6 48.4,475.2 46.6,466.2 50.6,465.9 62.1,463.2 62.1,456.8 51.9,455.7 45.7,458.0 42.2,453.4 31.1,450.0 38.6,450.0 41.3,446.6 45.7,449.7 49.7,445.9 47.5,436.8 43.9,433.0 39.5,441.0 37.7,433.0 42.2,425.0 47.5,427.7 50.2,423.1 55.5,423.9 62.1,424.7 71.3,423.1 76.8,431.9 79.9,433.8 82.6,431.9 88.4,426.2 97.2,426.9 103.9,427.7 108.8,426.9 105.7,424.7 102.1,421.6 106.1,417.8 111.0,412.4 118.6,411.7 121.7,409.4 121.7,405.9 126.1,398.7 122.1,399.4 110.6,404.8 111.0,400.2 104.8,401.7 100.8,400.6 95.5,394.8 98.6,394.1 112.3,389.8 106.6,387.9 106.1,384.8 116.3,382.5 111.0,378.6 115.0,375.6 111.5,373.2 117.2,367.0 118.3,359.3 124.8,361.6 131.9,354.2 132.3,357.3 135.4,361.6 140.3,351.9 144.3,360.0 147.2,350.3 147.9,355.4 151.4,364.3 144.3,374.8 153.2,367.8 155.2,361.2 151.0,356.2 152.3,349.5 157.6,349.1" fill="#f2efe9" /><polygon points="301.6,506.5 304.7,503.2 306.9,499.9 299.8,499.9 298.2,496.5 295.8,492.1 293.3,492.1 288.7,492.1 283.4,492.8 278.0,499.1 277.6,500.2 281.1,502.5 285.6,506.2 288.0,509.1 290.2,512.8 294.0,513.2 296.7,510.3" fill="#f2efe9" /><polygon points="292.5,416.6 291.8,423.9 294.9,425.4 290.9,431.1 287.8,436.8 283.8,440.6 281.1,444.0 279.8,442.9 276.0,442.9 272.3,444.4 274.5,441.7 275.8,436.0 277.8,431.1 282.5,426.6 284.2,421.2" fill="#f2efe9" /><polygon points="415.7,691.0 419.7,687.9 428.6,683.7 434.8,686.1 438.8,689.3 435.3,691.7 433.0,695.9 428.6,697.0 423.3,693.1 418.8,690.3" fill="#f2efe9" /><polygon points="251.4,316.6 253.2,315.4 257.6,320.2 258.0,326.8 259.8,330.4 260.3,333.5 259.4,337.4 257.1,337.8 254.0,337.4 249.4,332.7 248.7,328.8 247.2,321.3 249.6,317.8" fill="#f2efe9" /><polygon points="256.7,299.2 259.8,302.0 262.0,306.0 263.4,313.1 262.9,315.4 259.8,311.1 258.0,305.2" fill="#f2efe9" /><polygon points="214.3,298.4 215.2,305.2 217.6,311.9 218.5,320.2 211.4,322.5 205.2,325.7 207.4,317.0 207.0,312.7 208.7,310.7 203.8,311.9 203.0,313.9 197.2,319.0 199.4,310.7 204.7,302.4 205.2,306.7 207.8,302.8 214.3,302.4" fill="#f2efe9" /><polygon points="233.2,283.7 229.6,290.9 226.5,297.6 222.1,306.3 219.8,309.9 215.8,305.2 216.3,301.2 219.8,296.4 224.3,297.2 220.7,293.3 229.6,285.3" fill="#f2efe9" /><polygon points="213.2,282.9 212.3,286.9 209.6,291.7 207.8,292.5 208.7,288.5 210.5,284.5" fill="#f2efe9" /><polygon points="216.7,243.2 214.1,240.8 205.2,244.4 207.4,247.3 205.0,249.7 213.2,253.3 206.1,254.1 211.0,256.5 220.7,256.5 213.2,259.7 207.8,264.1 220.7,263.3 209.2,267.8 203.4,267.4 203.4,270.2 210.1,270.6 220.7,268.2 225.6,265.4 232.3,263.7 234.5,260.5 235.2,256.9 232.9,255.7 228.3,252.1 222.1,251.7" fill="#f2efe9" /><polygon points="199.8,238.0 199.4,240.4 192.3,246.9 189.2,248.1 189.6,245.2 194.1,241.2" fill="#f2efe9" /><polygon points="186.5,250.1 185.2,252.5 180.7,255.7 177.6,258.1 175.9,256.5 176.7,253.3 179.9,251.7 183.4,249.7" fill="#f2efe9" /><polygon points="205.2,207.9 208.7,211.2 208.3,216.1 205.2,217.7 201.2,215.3 200.7,210.4" fill="#f2efe9" /><polygon points="213.6,217.7 214.9,221.0 214.1,223.0 211.8,221.8 212.3,218.9" fill="#f2efe9" /><polygon points="197.6,207.1 198.1,208.3 194.1,209.1 193.2,207.9" fill="#f2efe9" /><polygon points="204.5,154.8 211.0,161.0 213.6,170.1 211.4,179.2 215.4,184.1 214.9,187.0 220.7,189.9 223.8,192.8 231.8,190.3 234.7,194.4 228.7,201.0 224.5,207.5 218.9,211.2 219.8,203.8 222.9,198.9 215.2,201.0 212.7,196.5 206.1,199.7 207.0,196.5 203.0,192.4 199.4,189.5 201.2,183.3 194.1,185.0 184.7,178.0 187.9,170.5 194.1,176.7 193.2,171.8 191.6,163.1 198.5,169.3 206.1,175.9 203.0,169.3 203.4,164.7" fill="#f2efe9" /><polygon points="219.8,171.8 220.3,176.7 218.5,184.1 216.3,185.8 215.8,180.0 217.6,174.2" fill="#f2efe9" /><polygon points="208.3,86.7 209.8,88.8 212.7,101.1 210.1,104.9 213.6,108.3 211.8,112.5 202.5,112.5 203.4,118.4 203.8,126.8 199.8,130.2 195.4,136.0 190.1,141.0 183.9,138.5 185.2,143.5 177.2,152.7 174.5,149.4 169.2,144.4 177.6,140.2 175.9,135.2 171.4,130.6 173.2,125.1 170.1,119.2 174.1,114.2 174.1,110.0 182.1,109.1 184.7,106.6 189.2,102.4 196.3,99.0 203.0,93.0" fill="#f2efe9" /><polygon points="167.4,153.5 171.0,158.5 168.3,163.5 168.8,167.6 165.6,172.6 165.6,175.9 164.3,178.4 165.6,185.8 163.4,193.2 162.1,200.6 162.5,207.1 158.5,204.6 156.8,196.5 156.8,188.2 157.6,181.7 157.2,175.9 158.5,174.2 157.6,169.3 152.3,162.7 154.1,158.5 159.9,159.3 164.3,156.0" fill="#f2efe9" /><polygon points="156.3,210.4 157.6,214.4 155.0,217.7 152.3,219.3 151.0,215.3 153.2,211.2" fill="#f2efe9" /><polygon points="338.0,33.5 343.8,31.8 349.5,34.8 350.9,39.1 347.8,45.2 353.1,43.4 354.9,46.4 362.0,45.6 366.4,48.2 365.5,52.5 357.1,54.2 354.2,49.0 344.9,52.5 339.8,48.6 337.1,43.0 337.5,36.1" fill="#f2efe9" /><polygon points="334.0,55.1 338.4,52.0 343.3,56.3 344.7,59.3 347.3,64.1 342.0,64.5 336.7,59.8" fill="#f2efe9" /><polygon points="356.6,58.9 358.9,59.8 356.6,64.1 354.9,67.9 352.2,64.9 353.5,60.6" fill="#f2efe9" /><polygon points="350.9,27.9 354.4,30.5 352.2,33.9 347.8,32.2" fill="#f2efe9" /><polygon points="355.3,14.8 358.9,17.4 359.8,23.5 356.6,24.4 353.1,21.8 350.0,18.3" fill="#f2efe9" /><polygon points="358.0,11.3 358.9,16.6 357.1,16.6 356.6,12.2" fill="#f2efe9" /><polygon points="373.1,19.2 378.9,20.0 379.7,22.6 373.1,24.4 367.3,27.9 365.5,26.1 370.0,22.6" fill="#f2efe9" /><polygon points="370.0,31.3 374.0,34.8 372.2,39.1 368.2,38.2 367.3,34.8" fill="#f2efe9" /><polygon points="363.8,24.4 365.1,28.7 362.9,33.9 361.1,30.5" fill="#f2efe9" /><polygon points="358.4,39.1 362.0,40.8 359.8,43.4 355.3,42.6" fill="#f2efe9" /><polygon points="378.9,11.3 380.6,13.9 378.0,14.8 377.1,12.2" fill="#f2efe9" /><polygon points="400.2,755.9 404.2,757.6 414.4,761.0 421.9,759.0 430.2,757.6 430.4,765.1 428.6,771.3 402.0,771.3 403.7,764.5 400.2,759.7" fill="#f2efe9" /><polygon points="390.0,755.5 390.4,756.9 387.3,757.3 387.3,756.2" fill="#f2efe9" /><polygon points="206.5,741.4 207.4,742.8 206.1,743.5 205.2,742.1" fill="#f2efe9" /><polygon points="278.9,653.0 279.4,655.8 278.5,655.8 278.2,653.0" fill="#f2efe9" /><polygon points="601.8,660.8 591.6,663.6 580.5,667.1 568.5,669.2 562.3,672.4 556.8,676.3 557.0,686.1 556.8,700.8 555.6,708.8 557.4,712.0 555.2,716.1 558.5,722.1 558.8,723.8 552.5,724.5 550.8,730.0 547.2,732.8 534.3,741.8 517.9,745.9 502.8,753.1 495.2,756.9 493.7,758.6 489.2,770.6 490.8,778.1 601.8,778.1" fill="#f2efe9" /><polygon points="414.4,-2.7 415.3,-0.0 413.1,0.8 412.6,-1.8" fill="#f2efe9" /><polygon points="207.4,347.6 212.3,349.1 211.4,350.7 207.4,348.8" fill="#f2efe9" /><polygon points="31.1,450.0 39.9,451.2 42.2,453.4 44.4,457.2 45.3,451.9 41.3,446.6 36.8,448.2" fill="#f2efe9" /><polygon points="106.1,370.9 108.8,373.2 107.0,374.0 105.7,371.7" fill="#f2efe9" /><polygon points="49.7,511.0 56.8,513.2 58.2,516.2 54.6,515.4 50.2,513.2" fill="#f2efe9" /></g><polygon points="196.7,393.3 206.5,394.8 208.7,402.5 204.3,410.2 195.4,408.6 193.2,401.0" fill="#aad3df"/><polygon points="137.7,408.6 146.5,410.2 148.8,419.3 142.1,414.0" fill="#aad3df"/><polygon points="72.4,483.5 75.5,485.7 78.6,491.7 82.1,496.9 80.8,498.4 74.1,491.7 68.8,487.2" fill="#aad3df"/><polygon points="71.0,474.5 73.3,478.2 70.1,480.5 67.9,476.0" fill="#aad3df"/><polygon points="74.1,442.9 76.8,445.9 75.5,450.4 73.3,446.6" fill="#aad3df"/><polygon points="131.0,478.2 133.2,482.0 133.2,489.4 131.0,489.4 129.7,482.0" fill="#aad3df"/><polygon points="117.7,515.4 119.4,522.8 116.3,530.2 111.0,536.1 109.7,533.9 114.1,526.5 115.5,519.1" fill="#aad3df"/><polygon points="294.5,177.5 279.4,200.6 277.6,202.2 292.2,178.4" fill="#aad3df"/><polygon points="277.6,267.0 282.9,285.3 284.2,291.7 279.8,291.7 279.4,285.3 276.2,267.8" fill="#aad3df"/><polygon points="306.5,249.3 299.8,253.3 294.5,257.3 294.0,255.7 299.8,250.9 305.6,246.9" fill="#aad3df"/><polygon points="264.3,259.7 251.8,273.4 246.5,281.3 245.2,282.1 250.0,272.6 262.5,258.9" fill="#aad3df"/><polygon points="286.5,115.9 281.1,123.4 275.4,128.5 274.5,127.6 279.4,121.8 285.1,115.0" fill="#aad3df"/><polygon points="242.0,153.5 248.7,159.3 248.3,161.0 240.7,155.2" fill="#aad3df"/><polygon points="299.8,237.2 288.7,238.8 288.7,239.6 299.8,238.8" fill="#aad3df"/><polygon points="299.8,216.9 290.9,229.1 289.6,229.9 298.5,217.7" fill="#aad3df"/><polygon points="264.3,212.8 250.9,218.5 250.9,219.3 264.3,214.4" fill="#aad3df"/><g clip-path="url(#lc)"><path d="M477.5 628.1 L466.4 603.0 L453.0 592.2 L444.2 577.7 L433.0 552.2 L428.6 528.0 L424.2 493.2 L419.7 464.7 L425.1 453.4 L412.2 414.7 L417.5 388.7 L414.4 374.0 L411.3 358.5 L410.8 339.8 L397.5 311.5 L375.3 293.3 L344.2 298.8 M477.5 624.5 L477.5 603.0 L475.2 574.1 L473.0 554.4 L457.5 530.2 L450.8 517.7 L435.3 484.2 L425.1 453.4 M433.0 566.8 L419.7 563.2 L402.0 559.5 L393.1 537.5 L388.6 522.8 L373.1 493.2 L368.6 466.2 L363.3 444.4 L370.9 415.5 L364.2 397.9 L356.2 379.4 L350.0 371.7 L337.5 362.4 L333.1 346.0 L322.0 332.7 L307.3 311.5 L297.6 304.4 M473.0 631.6 L441.9 635.2 L406.4 628.1 L373.1 631.6 L368.6 624.5 L353.1 625.9 L344.2 630.2 L327.8 631.6 L310.9 620.2 L295.3 606.6 L265.6 610.2 M397.5 563.2 L390.8 581.3 L388.6 605.1 L370.9 631.6 L353.1 657.9 L348.7 667.1 L330.9 686.8 L319.8 698.7 L304.2 709.2 L288.7 705.7 L277.6 704.3 M330.9 686.8 L308.7 686.1 L293.1 693.1 L277.6 704.3 L264.3 712.7 L255.4 721.0 L240.7 728.6 M468.6 635.2 L437.5 648.0 L428.6 662.9 L424.2 672.8 M437.5 648.0 L419.7 653.0 L388.6 660.1 L357.5 672.1 L344.2 681.2 L330.9 686.8 M468.6 628.1 L433.0 613.8 L427.3 591.4 L416.2 575.5 L406.4 563.2 M357.5 493.2 L384.2 485.7 L402.0 474.5 L417.5 467.0 L441.9 470.7 L468.6 467.0 M488.6 624.5 L495.2 603.0 L491.7 581.3 L504.1 577.7 L519.7 566.8 L544.1 550.0 L562.8 552.2 M495.2 625.9 L507.2 615.2 L526.3 603.7 L537.4 592.2 L553.0 581.3 L564.1 561.7 M490.8 635.2 L506.3 642.3 L509.4 648.0 L525.0 656.5 L537.4 660.8 L544.5 657.9 M481.0 642.3 L478.4 660.1 L480.1 679.1 M424.2 672.8 L437.5 677.7 L451.7 678.4 L480.1 679.1 L486.4 676.3 L498.3 681.2 L511.7 677.0 M357.5 508.0 L339.8 504.3 L317.6 502.1 L302.9 506.5 L290.9 502.1 L282.0 500.6 M364.2 544.9 L350.9 530.2 L339.8 522.8 L317.6 515.4 L302.9 506.5 M364.2 544.9 L346.4 548.5 L335.3 559.5 L305.1 566.1 M399.7 563.2 L377.5 544.9 L364.2 544.9 M334.0 261.3 L320.7 237.2 L297.6 218.5 L316.2 196.5 L298.9 173.4 L289.6 163.5 L306.0 146.0 L309.6 132.7 L323.8 120.1 L340.7 104.9 L349.1 93.0 M339.8 297.2 L335.3 289.3 L334.0 261.3 L353.1 256.5 L357.5 241.2 L388.2 216.1 L393.1 200.6 L395.3 184.1 L406.4 171.8 M393.1 200.6 L380.6 189.9 L362.9 175.9 L338.9 159.3 L314.4 165.1 L298.9 173.4 M344.2 298.8 L326.4 302.8 L297.6 304.4 M297.6 304.4 L282.9 293.3 L281.1 262.1 L264.3 240.4 L259.8 227.4 L274.0 207.1 L287.8 185.8 L298.9 173.4 M281.1 262.1 L264.3 259.7 L243.4 260.5 M297.6 304.4 L286.5 324.1 L280.7 335.9 L270.9 353.0 L262.9 379.4 M350.0 371.7 L326.4 366.3 L311.8 376.3 L286.5 379.4 L262.9 379.4 M297.6 304.4 L311.3 283.7 L334.0 261.3 M298.9 173.4 L289.6 163.5 L264.3 155.2 L257.1 138.5 M259.8 227.4 L244.3 221.0 L227.4 212.8 M274.0 207.1 L246.5 196.5 L232.7 189.9 L224.3 193.2 L211.4 179.2 M208.3 496.9 L204.3 469.2 L202.1 448.2 L204.7 434.5 L215.4 414.0 L222.9 402.5 M204.3 498.4 L190.5 506.5 L179.9 511.7 L162.1 520.6 L139.9 526.5 L122.1 533.1 L103.0 547.8 M162.1 520.6 L148.8 537.5 L135.9 558.0 L134.6 569.7 L118.6 585.7 L110.1 603.0 M190.5 506.5 L178.5 534.6 L168.8 548.5 L171.0 563.2 L170.5 577.0 M202.1 496.1 L188.7 493.2 L171.0 488.7 L133.7 491.7 L121.2 498.4 L97.7 500.6 L84.4 502.8 M171.0 488.7 L160.3 484.2 L139.9 468.5 L126.6 451.9 L117.7 444.4 L110.1 427.7 M213.2 500.6 L215.4 512.5 L217.6 524.3 L212.7 537.5 L194.5 559.5 L199.4 571.2 M103.0 547.8 L87.5 534.6 L93.2 515.4 L84.4 502.8 M103.0 547.8 L100.8 570.4 L102.1 585.7 L110.1 603.0 M103.0 547.8 L86.6 559.5 L84.4 563.2 L66.6 574.1 L55.5 576.2 M110.1 603.0 L88.8 603.0 L64.4 591.4 L55.5 576.2 M84.4 502.8 L93.2 484.2 L96.8 467.0 L95.5 450.4 L110.1 427.7 M110.1 427.7 L118.6 411.7 L126.1 398.7 L140.8 387.1 L143.0 375.6 L161.2 371.7 M161.2 371.7 L177.6 377.9 L197.6 391.0 L211.0 393.3 L222.9 402.5 M222.9 402.5 L204.3 410.2 L185.6 410.2 L166.5 416.3 L147.4 422.4 L131.0 425.4 L110.1 427.7 M206.5 493.9 L189.6 474.5 L187.9 449.7 L176.7 429.2 L166.5 416.3 L162.1 402.5 L154.5 384.8 L161.2 371.7 M139.9 468.5 L117.7 464.7 L73.3 458.7 L63.5 463.2 M110.1 603.0 L137.7 599.4 L147.9 589.3 L170.5 577.0 L184.3 574.1 L199.4 571.2 M222.9 402.5 L227.8 383.3 L219.8 367.8 M222.9 402.5 L207.4 382.5 L197.6 366.3 L190.1 361.6 M591.6 665.0 L569.0 670.6 L558.3 686.1 L561.9 702.2 L567.6 730.0 L535.2 743.8 L535.2 764.5 M569.0 670.6 L586.3 684.7 L601.8 695.2 M414.4 761.0 L421.1 771.3" fill="none" stroke="#f0b4b4" stroke-width="0.9" stroke-linejoin="round" opacity="0.85"/><path d="M163.9 366.3 L157.6 375.6 L151.0 391.0 L135.4 400.2 L123.4 412.4 L136.8 425.4 L151.0 439.1 L168.8 433.0 L175.4 426.9 L173.2 417.8 L182.1 421.6 L188.7 434.5 L191.0 444.4 L206.5 440.6 L207.8 442.1 M396.2 308.3 L384.2 320.9 L388.6 336.6 L375.3 344.5 L366.4 356.2 L355.3 367.8 L350.9 372.5 M349.5 500.6 L364.2 522.8 L348.7 526.5 L350.9 544.9 L348.7 559.5 L353.1 574.1 L348.7 592.2 L364.2 606.6 L367.8 622.4" fill="none" stroke="#b49ac4" stroke-width="1.3" stroke-linejoin="round" opacity="0.55"/></g>
</svg>
<div class="lbl" style="left:242.0px;top:138.5px;font-size:9.6px;color:#8d7a99;font-style:italic;">Alba / Scotland</div><div class="lbl" style="left:394.3px;top:209.0px;font-size:10px;color:#666;">Aberdeen</div><div class="lbl" style="left:354.8px;top:249.5px;font-size:10px;color:#666;">Dundee</div><div class="lbl" style="left:345.0px;top:288.5px;font-size:12.3px;color:#555;">Edinburgh</div><div class="lbl" style="left:308.0px;top:314.5px;font-size:12px;color:#555;">Glasgow</div><div class="lbl" style="left:310.0px;top:343.5px;font-size:11.5px;color:#8d7a99;letter-spacing:1.0px;">United Kingdom</div><div class="lbl" style="left:416.0px;top:349.5px;font-size:11.4px;color:#555;">Newcastle</div><div class="lbl" style="left:415.5px;top:365.0px;font-size:11.4px;color:#555;">upon Tyne</div><div class="lbl" style="left:285.0px;top:433.0px;font-size:11.5px;color:#8a6f88;letter-spacing:0.8px;">Isle of Man</div><div class="lbl" style="left:394.0px;top:407.0px;font-size:12px;color:#555;font-style:italic;">Great Britain</div><div class="lbl" style="left:161.0px;top:353.0px;font-size:10px;color:#555;">Derry /</div><div class="lbl" style="left:160.8px;top:365.3px;font-size:10px;color:#555;">Londonderry</div><div class="lbl" style="left:199.0px;top:404.5px;font-size:10px;color:#8d7a99;letter-spacing:0.45px;">Tuaisceart</div><div class="lbl" style="left:199.0px;top:415.5px;font-size:10px;color:#8d7a99;letter-spacing:0.45px;">Éireann /</div><div class="lbl" style="left:119.2px;top:492.0px;font-size:10px;color:#8d7a99;letter-spacing:0.45px;">Éire / Ireland</div><div class="lbl" style="left:208.3px;top:487.5px;font-size:12.8px;color:#555;">Dublin</div><div class="lbl" style="left:110.0px;top:595.0px;font-size:10px;color:#666;">Cork</div><div class="lbl" style="left:415.0px;top:477.0px;font-size:12px;color:#555;">Leeds</div><div class="lbl" style="left:420.5px;top:487.2px;font-size:11px;color:#555;">Sheffield</div><div class="lbl" style="left:355.0px;top:500.0px;font-size:11.5px;color:#555;">Liverpool</div><div class="lbl" style="left:402.6px;top:527.5px;font-size:12.5px;color:#555;">Nottingham</div><div class="lbl" style="left:402.0px;top:552.8px;font-size:12.5px;color:#555;">Birmingham</div><div class="lbl" style="left:474.0px;top:547.0px;font-size:10px;color:#666;">Peterborough</div><div class="lbl" style="left:546.0px;top:557.5px;font-size:10px;color:#666;">Norwich</div><div class="lbl" style="left:470.5px;top:574.2px;font-size:10px;color:#666;">Milton Keynes</div><div class="lbl" style="left:433.0px;top:607.0px;font-size:10px;color:#666;">Oxford</div><div class="lbl" style="left:529.0px;top:597.0px;font-size:10px;color:#666;">Colchester</div><div class="lbl" style="left:517.2px;top:638.3px;font-size:10px;color:#666;">Southend-</div><div class="lbl" style="left:519.0px;top:648.3px;font-size:10px;color:#666;">on-Sea</div><div class="lbl" style="left:307.5px;top:558.7px;font-size:10px;color:#8d7a99;letter-spacing:0.45px;">Cymru /</div><div class="lbl" style="left:307.5px;top:570.0px;font-size:10px;color:#8d7a99;letter-spacing:0.45px;">Wales</div><div class="lbl" style="left:285.5px;top:624.3px;font-size:10.5px;color:#666;">Swansea</div><div class="lbl" style="left:347.0px;top:624.0px;font-size:12px;color:#555;">Cardiff</div><div class="lbl" style="left:382.0px;top:647.5px;font-size:10px;color:#666;">Bath</div><div class="lbl" style="left:408.0px;top:675.0px;font-size:11.4px;color:#555;">Southampton</div><div class="lbl" style="left:444.0px;top:688.5px;font-size:10px;color:#666;">Portsmouth</div><div class="lbl" style="left:305.0px;top:704.0px;font-size:10px;color:#666;">Plymouth</div><div class="lbl" style="left:565.0px;top:665.5px;font-size:10px;color:#666;">Dunkerque</div><div class="lbl" style="left:491.5px;top:764.5px;font-size:10px;color:#666;">Le Havre</div><div class="lbl" style="left:535.0px;top:770.3px;font-size:10px;color:#666;">Rouen</div><div class="lbl" style="left:374.0px;top:765.5px;font-size:12.7px;color:#777;">Guernsey</div>
<svg class="land" width="585" height="800" viewBox="0 0 585 800" style="overflow:hidden"><g id="mk">
<g transform="translate(414.2,0.5)"><circle r="11.65" fill="#00f5a0"/><text transform="scale(0.9,1)" y="5.45" fill="#111">4</text></g>
<g transform="translate(357.5,49.0)"><circle r="11.65" fill="#00f5a0"/><text transform="scale(0.9,1)" y="5.45" fill="#111">4</text></g>
<g transform="translate(348.8,91.5)"><circle r="11.65" fill="#00f5a0"/><text transform="scale(0.9,1)" y="5.45" fill="#111">4</text></g>
<g transform="translate(289.5,106.0)"><circle r="11.65" fill="#00ffff"/><text transform="scale(0.9,1)" y="5.45" fill="#111">3</text></g>
<g transform="translate(312.6,111.1)"><circle r="11.65" fill="#00ffff"/><text transform="scale(0.9,1)" y="5.45" fill="#111">2</text></g>
<g transform="translate(205.5,111.5)"><circle r="11.65" fill="#00f5a0"/><text transform="scale(0.9,1)" y="5.45" fill="#111">5</text></g>
<g transform="translate(277.1,115.4)"><circle r="11.65" fill="#00ffff"/><text transform="scale(0.9,1)" y="5.45" fill="#111">2</text></g>
<g transform="translate(264.0,124.5)"><circle r="11.65" fill="#00ffff"/><text transform="scale(0.9,1)" y="5.45" fill="#111">3</text></g>
<g transform="translate(236.5,142.0)"><circle r="11.65" fill="#00f5a0"/><text transform="scale(0.9,1)" y="5.45" fill="#111">5</text></g>
<g transform="translate(310.8,145.0)"><circle r="11.65" fill="#00ffff"/><text transform="scale(0.9,1)" y="5.45" fill="#111">3</text></g>
<g transform="translate(180.2,148.7)"><circle r="11.65" fill="#00f5a0"/><text transform="scale(0.9,1)" y="5.45" fill="#111">6</text></g>
<g transform="translate(269.0,153.1)"><circle r="11.65" fill="#00ffff"/><text transform="scale(0.9,1)" y="5.45" fill="#111">1</text></g>
<g transform="translate(340.0,153.2)"><circle r="11.65" fill="#00f5a0"/><text transform="scale(0.9,1)" y="5.45" fill="#111">4</text></g>
<g transform="translate(328.0,159.6)"><circle r="11.65" fill="#00ffff"/><text transform="scale(0.9,1)" y="5.45" fill="#111">3</text></g>
<g transform="translate(251.5,162.8)"><circle r="11.65" fill="#00f5a0"/><text transform="scale(0.9,1)" y="5.45" fill="#111">4</text></g>
<g transform="translate(292.2,174.5)"><circle r="11.65" fill="#00ffff"/><text transform="scale(0.9,1)" y="5.45" fill="#111">2</text></g>
<g transform="translate(380.2,176.0)"><circle r="11.65" fill="#00ffff"/><text transform="scale(0.9,1)" y="5.45" fill="#111">3</text></g>
<g transform="translate(234.0,178.4)"><circle r="11.65" fill="#0a96fa"/><text transform="scale(0.9,1)" y="5.45" fill="#fff">-1</text></g>
<g transform="translate(158.5,182.8)"><circle r="11.65" fill="#00f5a0"/><text transform="scale(0.9,1)" y="5.45" fill="#111">6</text></g>
<g transform="translate(287.7,186.0)"><circle r="11.65" fill="#00ffff"/><text transform="scale(0.9,1)" y="5.45" fill="#111">3</text></g>
<g transform="translate(316.5,194.8)"><circle r="11.65" fill="#00ffff"/><text transform="scale(0.9,1)" y="5.45" fill="#111">2</text></g>
<g transform="translate(389.2,195.7)"><circle r="11.65" fill="#00ffff"/><text transform="scale(0.9,1)" y="5.45" fill="#111">3</text></g>
<g transform="translate(274.8,196.9)"><circle r="11.65" fill="#00ffff"/><text transform="scale(0.9,1)" y="5.45" fill="#111">2</text></g>
<g transform="translate(247.5,197.7)"><circle r="11.65" fill="#00f5a0"/><text transform="scale(0.9,1)" y="5.45" fill="#111">5</text></g>
<g transform="translate(324.4,202.8)"><circle r="11.65" fill="#0a6efa"/><text transform="scale(0.9,1)" y="5.45" fill="#fff">-4</text></g>
<g transform="translate(361.4,206.6)"><circle r="11.65" fill="#00ffff"/><text transform="scale(0.9,1)" y="5.45" fill="#111">2</text></g>
<g transform="translate(345.1,208.9)"><circle r="11.65" fill="#00ffff"/><text transform="scale(0.9,1)" y="5.45" fill="#111"></text></g>
<g transform="translate(335.0,212.0)"><circle r="11.65" fill="#00ffff"/><text transform="scale(0.9,1)" y="5.45" fill="#111">1</text></g>
<g transform="translate(298.2,217.6)"><circle r="11.65" fill="#00ffff"/><text transform="scale(0.9,1)" y="5.45" fill="#111">2</text></g>
<g transform="translate(334.5,222.3)"><circle r="11.65" fill="#0a96fa"/><text transform="scale(0.9,1)" y="5.45" fill="#fff">-2</text></g>
<g transform="translate(277.9,223.6)"><circle r="11.65" fill="#00ffff"/><text transform="scale(0.9,1)" y="5.45" fill="#111">3</text></g>
<g transform="translate(386.0,225.3)"><circle r="11.65" fill="#00ffff"/><text transform="scale(0.9,1)" y="5.45" fill="#111">3</text></g>
<g transform="translate(266.2,228.6)"><circle r="11.65" fill="#0a6efa"/><text transform="scale(0.9,1)" y="5.45" fill="#fff">-4</text></g>
<g transform="translate(180.8,253.8)"><circle r="11.65" fill="#00f5a0"/><text transform="scale(0.9,1)" y="5.45" fill="#111">6</text></g>
<g transform="translate(244.5,257.0)"><circle r="11.65" fill="#00f5a0"/><text transform="scale(0.9,1)" y="5.45" fill="#111">6</text></g>
<g transform="translate(279.8,260.4)"><circle r="11.65" fill="#00ffff"/><text transform="scale(0.9,1)" y="5.45" fill="#111">3</text></g>
<g transform="translate(359.6,263.5)"><circle r="11.65" fill="#00f5a0"/><text transform="scale(0.9,1)" y="5.45" fill="#111">4</text></g>
<g transform="translate(320.7,267.3)"><circle r="11.65" fill="#00f5a0"/><text transform="scale(0.9,1)" y="5.45" fill="#111">4</text></g>
<g transform="translate(345.5,293.5)"><circle r="11.65" fill="#00f5a0"/><text transform="scale(0.9,1)" y="5.45" fill="#111">4</text></g>
<g transform="translate(338.2,298.5)"><circle r="11.65" fill="#00f5a0"/><text transform="scale(0.9,1)" y="5.45" fill="#111">4</text></g>
<g transform="translate(285.5,300.8)"><circle r="11.65" fill="#00f5a0"/><text transform="scale(0.9,1)" y="5.45" fill="#111">4</text></g>
<g transform="translate(314.5,304.0)"><circle r="11.65" fill="#00ffff"/><text transform="scale(0.9,1)" y="5.45" fill="#111">3</text></g>
<g transform="translate(268.8,313.2)"><circle r="11.65" fill="#00f5a0"/><text transform="scale(0.9,1)" y="5.45" fill="#111">6</text></g>
<g transform="translate(380.8,315.8)"><circle r="11.65" fill="#00ffff"/><text transform="scale(0.9,1)" y="5.45" fill="#111">3</text></g>
<g transform="translate(209.0,318.8)"><circle r="11.65" fill="#00f5a0"/><text transform="scale(0.9,1)" y="5.45" fill="#111">5</text></g>
<g transform="translate(320.5,322.5)"><circle r="11.65" fill="#00ffff"/><text transform="scale(0.9,1)" y="5.45" fill="#111">3</text></g>
<g transform="translate(282.0,330.8)"><circle r="11.65" fill="#00f5a0"/><text transform="scale(0.9,1)" y="5.45" fill="#111">5</text></g>
<g transform="translate(283.2,334.5)"><circle r="11.65" fill="#00f5a0"/><text transform="scale(0.9,1)" y="5.45" fill="#111">5</text></g>
<g transform="translate(233.5,337.5)"><circle r="11.65" fill="#00f5a0"/><text transform="scale(0.9,1)" y="5.45" fill="#111">6</text></g>
<g transform="translate(415.0,339.0)"><circle r="11.65" fill="#00f5a0"/><text transform="scale(0.9,1)" y="5.45" fill="#111">4</text></g>
<g transform="translate(160.8,343.2)"><circle r="11.65" fill="#00f5a0"/><text transform="scale(0.9,1)" y="5.45" fill="#111">6</text></g>
<g transform="translate(343.8,347.5)"><circle r="11.65" fill="#00ffff"/><text transform="scale(0.9,1)" y="5.45" fill="#111">3</text></g>
<g transform="translate(386.2,349.5)"><circle r="11.65" fill="#00ffff"/><text transform="scale(0.9,1)" y="5.45" fill="#111">3</text></g>
<g transform="translate(372.0,353.2)"><circle r="11.65" fill="#00ffff"/><text transform="scale(0.9,1)" y="5.45" fill="#111">3</text></g>
<g transform="translate(197.0,354.5)"><circle r="11.65" fill="#00f5a0"/><text transform="scale(0.9,1)" y="5.45" fill="#111">5</text></g>
<g transform="translate(411.2,355.0)"><circle r="11.65" fill="#00f5a0"/><text transform="scale(0.9,1)" y="5.45" fill="#111">4</text></g>
<g transform="translate(213.5,357.8)"><circle r="11.65" fill="#00f5a0"/><text transform="scale(0.9,1)" y="5.45" fill="#111">5</text></g>
<g transform="translate(177.2,358.8)"><circle r="11.65" fill="#00f5a0"/><text transform="scale(0.9,1)" y="5.45" fill="#111">5</text></g>
<g transform="translate(208.5,367.8)"><circle r="11.65" fill="#00f5a0"/><text transform="scale(0.9,1)" y="5.45" fill="#111">4</text></g>
<g transform="translate(373.2,367.8)"><circle r="11.65" fill="#00ffff"/><text transform="scale(0.9,1)" y="5.45" fill="#111">2</text></g>
<g transform="translate(402.5,370.8)"><circle r="11.65" fill="#00ffff"/><text transform="scale(0.9,1)" y="5.45" fill="#111">3</text></g>
<g transform="translate(311.2,375.8)"><circle r="11.65" fill="#00f5a0"/><text transform="scale(0.9,1)" y="5.45" fill="#111">4</text></g>
<g transform="translate(354.5,377.0)"><circle r="11.65" fill="#00f5a0"/><text transform="scale(0.9,1)" y="5.45" fill="#111">5</text></g>
<g transform="translate(176.5,379.5)"><circle r="11.65" fill="#00f5a0"/><text transform="scale(0.9,1)" y="5.45" fill="#111">4</text></g>
<g transform="translate(267.0,379.5)"><circle r="11.65" fill="#00f5a0"/><text transform="scale(0.9,1)" y="5.45" fill="#111">5</text></g>
<g transform="translate(199.0,382.0)"><circle r="11.65" fill="#00f5a0"/><text transform="scale(0.9,1)" y="5.45" fill="#111">5</text></g>
<g transform="translate(308.8,387.0)"><circle r="11.65" fill="#00f5a0"/><text transform="scale(0.9,1)" y="5.45" fill="#111">4</text></g>
<g transform="translate(416.2,390.0)"><circle r="11.65" fill="#00f5a0"/><text transform="scale(0.9,1)" y="5.45" fill="#111">4</text></g>
<g transform="translate(265.5,392.5)"><circle r="11.65" fill="#00f5a0"/><text transform="scale(0.9,1)" y="5.45" fill="#111">6</text></g>
<g transform="translate(183.5,393.2)"><circle r="11.65" fill="#00f5a0"/><text transform="scale(0.9,1)" y="5.45" fill="#111">4</text></g>
<g transform="translate(149.0,394.0)"><circle r="11.65" fill="#00f5a0"/><text transform="scale(0.9,1)" y="5.45" fill="#111">5</text></g>
<g transform="translate(231.5,394.5)"><circle r="11.65" fill="#00f5a0"/><text transform="scale(0.9,1)" y="5.45" fill="#111">5</text></g>
<g transform="translate(378.0,394.5)"><circle r="11.65" fill="#0a96fa"/><text transform="scale(0.9,1)" y="5.45" fill="#fff">-1</text></g>
<g transform="translate(332.5,397.0)"><circle r="11.65" fill="#00f5a0"/><text transform="scale(0.9,1)" y="5.45" fill="#111">5</text></g>
<g transform="translate(210.2,398.2)"><circle r="11.65" fill="#00f5a0"/><text transform="scale(0.9,1)" y="5.45" fill="#111">5</text></g>
<g transform="translate(355.0,398.2)"><circle r="11.65" fill="#00f5a0"/><text transform="scale(0.9,1)" y="5.45" fill="#111">5</text></g>
<g transform="translate(346.2,401.5)"><circle r="11.65" fill="#00f5a0"/><text transform="scale(0.9,1)" y="5.45" fill="#111">5</text></g>
<g transform="translate(227.0,402.5)"><circle r="11.65" fill="#00f5a0"/><text transform="scale(0.9,1)" y="5.45" fill="#111">5</text></g>
<g transform="translate(381.2,404.5)"><circle r="11.65" fill="#00ffff"/><text transform="scale(0.9,1)" y="5.45" fill="#111">3</text></g>
<g transform="translate(448.2,405.8)"><circle r="11.65" fill="#00f5a0"/><text transform="scale(0.9,1)" y="5.45" fill="#111">4</text></g>
<g transform="translate(367.0,408.2)"><circle r="11.65" fill="#00ffff"/><text transform="scale(0.9,1)" y="5.45" fill="#111">3</text></g>
<g transform="translate(326.2,408.2)"><circle r="11.65" fill="#00f5a0"/><text transform="scale(0.9,1)" y="5.45" fill="#111">5</text></g>
<g transform="translate(120.2,409.0)"><circle r="11.65" fill="#00f5a0"/><text transform="scale(0.9,1)" y="5.45" fill="#111">6</text></g>
<g transform="translate(190.2,421.2)"><circle r="11.65" fill="#00f5a0"/><text transform="scale(0.9,1)" y="5.45" fill="#111">5</text></g>
<g transform="translate(455.0,421.2)"><circle r="11.65" fill="#00ffff"/><text transform="scale(0.9,1)" y="5.45" fill="#111">3</text></g>
<g transform="translate(148.5,422.5)"><circle r="11.65" fill="#00f5a0"/><text transform="scale(0.9,1)" y="5.45" fill="#111">5</text></g>
<g transform="translate(214.0,425.0)"><circle r="11.65" fill="#00f5a0"/><text transform="scale(0.9,1)" y="5.45" fill="#111">5</text></g>
<g transform="translate(392.5,425.0)"><circle r="11.65" fill="#00ffff"/><text transform="scale(0.9,1)" y="5.45" fill="#111">3</text></g>
<g transform="translate(418.8,425.0)"><circle r="11.65" fill="#00f5a0"/><text transform="scale(0.9,1)" y="5.45" fill="#111">4</text></g>
<g transform="translate(468.0,426.2)"><circle r="11.65" fill="#00f5a0"/><text transform="scale(0.9,1)" y="5.45" fill="#111">4</text></g>
<g transform="translate(363.8,427.5)"><circle r="11.65" fill="#00f5a0"/><text transform="scale(0.9,1)" y="5.45" fill="#111">5</text></g>
<g transform="translate(227.8,430.0)"><circle r="11.65" fill="#00f5a0"/><text transform="scale(0.9,1)" y="5.45" fill="#111">6</text></g>
<g transform="translate(197.2,430.5)"><circle r="11.65" fill="#00f5a0"/><text transform="scale(0.9,1)" y="5.45" fill="#111">5</text></g>
<g transform="translate(42.2,431.2)"><circle r="11.65" fill="#00fa46"/><text transform="scale(0.9,1)" y="5.45" fill="#111">7</text></g>
<g transform="translate(150.2,433.8)"><circle r="11.65" fill="#00f5a0"/><text transform="scale(0.9,1)" y="5.45" fill="#111">5</text></g>
<g transform="translate(425.0,433.8)"><circle r="11.65" fill="#00f5a0"/><text transform="scale(0.9,1)" y="5.45" fill="#111">4</text></g>
<g transform="translate(341.2,439.5)"><circle r="11.65" fill="#00f5a0"/><text transform="scale(0.9,1)" y="5.45" fill="#111">5</text></g>
<g transform="translate(457.5,440.0)"><circle r="11.65" fill="#00ffff"/><text transform="scale(0.9,1)" y="5.45" fill="#111">3</text></g>
<g transform="translate(478.2,440.8)"><circle r="11.65" fill="#00f5a0"/><text transform="scale(0.9,1)" y="5.45" fill="#111">5</text></g>
<g transform="translate(280.8,442.0)"><circle r="11.65" fill="#00f5a0"/><text transform="scale(0.9,1)" y="5.45" fill="#111">6</text></g>
<g transform="translate(359.5,442.5)"><circle r="11.65" fill="#00f5a0"/><text transform="scale(0.9,1)" y="5.45" fill="#111">6</text></g>
<g transform="translate(212.0,443.0)"><circle r="11.65" fill="#00f5a0"/><text transform="scale(0.9,1)" y="5.45" fill="#111">6</text></g>
<g transform="translate(407.5,443.0)"><circle r="11.65" fill="#00ffff"/><text transform="scale(0.9,1)" y="5.45" fill="#111">3</text></g>
<g transform="translate(161.5,445.0)"><circle r="11.65" fill="#00f5a0"/><text transform="scale(0.9,1)" y="5.45" fill="#111">5</text></g>
<g transform="translate(466.2,455.0)"><circle r="11.65" fill="#00f5a0"/><text transform="scale(0.9,1)" y="5.45" fill="#111">5</text></g>
<g transform="translate(95.2,455.5)"><circle r="11.65" fill="#00f5a0"/><text transform="scale(0.9,1)" y="5.45" fill="#111">5</text></g>
<g transform="translate(362.0,457.0)"><circle r="11.65" fill="#00f5a0"/><text transform="scale(0.9,1)" y="5.45" fill="#111">5</text></g>
<g transform="translate(428.2,458.8)"><circle r="11.65" fill="#00f5a0"/><text transform="scale(0.9,1)" y="5.45" fill="#111">4</text></g>
<g transform="translate(404.3,459.8)"><circle r="11.65" fill="#00ffff"/><text transform="scale(0.9,1)" y="5.45" fill="#111">3</text></g>
<g transform="translate(380.0,460.0)"><circle r="11.65" fill="#00f5a0"/><text transform="scale(0.9,1)" y="5.45" fill="#111">5</text></g>
<g transform="translate(407.5,461.2)"><circle r="11.65" fill="#00f5a0"/><text transform="scale(0.9,1)" y="5.45" fill="#111">4</text></g>
<g transform="translate(351.2,464.9)"><circle r="11.65" fill="#00f5a0"/><text transform="scale(0.9,1)" y="5.45" fill="#111">6</text></g>
<g transform="translate(366.2,465.3)"><circle r="11.65" fill="#00f5a0"/><text transform="scale(0.9,1)" y="5.45" fill="#111">5</text></g>
<g transform="translate(472.5,466.2)"><circle r="11.65" fill="#00f5a0"/><text transform="scale(0.9,1)" y="5.45" fill="#111">5</text></g>
<g transform="translate(427.5,475.0)"><circle r="11.65" fill="#00f5a0"/><text transform="scale(0.9,1)" y="5.45" fill="#111">4</text></g>
<g transform="translate(457.0,475.8)"><circle r="11.65" fill="#00f5a0"/><text transform="scale(0.9,1)" y="5.45" fill="#111">4</text></g>
<g transform="translate(389.5,478.0)"><circle r="11.65" fill="#00f5a0"/><text transform="scale(0.9,1)" y="5.45" fill="#111">5</text></g>
<g transform="translate(412.0,478.0)"><circle r="11.65" fill="#00ffff"/><text transform="scale(0.9,1)" y="5.45" fill="#111">3</text></g>
<g transform="translate(159.0,483.8)"><circle r="11.65" fill="#00f5a0"/><text transform="scale(0.9,1)" y="5.45" fill="#111">5</text></g>
<g transform="translate(351.2,486.2)"><circle r="11.65" fill="#00f5a0"/><text transform="scale(0.9,1)" y="5.45" fill="#111">6</text></g>
<g transform="translate(493.4,487.5)"><circle r="11.65" fill="#00f5a0"/><text transform="scale(0.9,1)" y="5.45" fill="#111">4</text></g>
<g transform="translate(209.8,490.0)"><circle r="11.65" fill="#00f5a0"/><text transform="scale(0.9,1)" y="5.45" fill="#111">5</text></g>
<g transform="translate(447.0,493.0)"><circle r="11.65" fill="#00f5a0"/><text transform="scale(0.9,1)" y="5.45" fill="#111">4</text></g>
<g transform="translate(420.0,494.5)"><circle r="11.65" fill="#00f5a0"/><text transform="scale(0.9,1)" y="5.45" fill="#111">4</text></g>
<g transform="translate(380.8,496.2)"><circle r="11.65" fill="#00f5a0"/><text transform="scale(0.9,1)" y="5.45" fill="#111">5</text></g>
<g transform="translate(46.5,499.2)"><circle r="11.65" fill="#00fa46"/><text transform="scale(0.9,1)" y="5.45" fill="#111">7</text></g>
<g transform="translate(202.2,500.0)"><circle r="11.65" fill="#00f5a0"/><text transform="scale(0.9,1)" y="5.45" fill="#111">5</text></g>
<g transform="translate(293.8,502.5)"><circle r="11.65" fill="#00f5a0"/><text transform="scale(0.9,1)" y="5.45" fill="#111">6</text></g>
<g transform="translate(285.5,503.8)"><circle r="11.65" fill="#00fa46"/><text transform="scale(0.9,1)" y="5.45" fill="#111">7</text></g>
<g transform="translate(330.5,503.8)"><circle r="11.65" fill="#00f5a0"/><text transform="scale(0.9,1)" y="5.45" fill="#111">6</text></g>
<g transform="translate(353.8,510.0)"><circle r="11.65" fill="#00f5a0"/><text transform="scale(0.9,1)" y="5.45" fill="#111">5</text></g>
<g transform="translate(462.6,510.0)"><circle r="11.65" fill="#00f5a0"/><text transform="scale(0.9,1)" y="5.45" fill="#111">4</text></g>
<g transform="translate(398.8,512.5)"><circle r="11.65" fill="#00ffff"/><text transform="scale(0.9,1)" y="5.45" fill="#111">3</text></g>
<g transform="translate(312.0,515.8)"><circle r="11.65" fill="#00f5a0"/><text transform="scale(0.9,1)" y="5.45" fill="#111">5</text></g>
<g transform="translate(478.6,515.8)"><circle r="11.65" fill="#00f5a0"/><text transform="scale(0.9,1)" y="5.45" fill="#111">4</text></g>
<g transform="translate(498.5,515.8)"><circle r="11.65" fill="#00f5a0"/><text transform="scale(0.9,1)" y="5.45" fill="#111">4</text></g>
<g transform="translate(372.5,516.2)"><circle r="11.65" fill="#00f5a0"/><text transform="scale(0.9,1)" y="5.45" fill="#111">5</text></g>
<g transform="translate(131.0,518.8)"><circle r="11.65" fill="#00f5a0"/><text transform="scale(0.9,1)" y="5.45" fill="#111">5</text></g>
<g transform="translate(464.6,522.0)"><circle r="11.65" fill="#00f5a0"/><text transform="scale(0.9,1)" y="5.45" fill="#111">4</text></g>
<g transform="translate(446.2,522.0)"><circle r="11.65" fill="#00f5a0"/><text transform="scale(0.9,1)" y="5.45" fill="#111">4</text></g>
<g transform="translate(386.2,522.5)"><circle r="11.65" fill="#00f5a0"/><text transform="scale(0.9,1)" y="5.45" fill="#111">4</text></g>
<g transform="translate(430.8,522.5)"><circle r="11.65" fill="#00f5a0"/><text transform="scale(0.9,1)" y="5.45" fill="#111">4</text></g>
<g transform="translate(536.5,526.2)"><circle r="11.65" fill="#00f5a0"/><text transform="scale(0.9,1)" y="5.45" fill="#111">5</text></g>
<g transform="translate(327.5,527.5)"><circle r="11.65" fill="#00f5a0"/><text transform="scale(0.9,1)" y="5.45" fill="#111">5</text></g>
<g transform="translate(544.0,527.5)"><circle r="11.65" fill="#00f5a0"/><text transform="scale(0.9,1)" y="5.45" fill="#111">5</text></g>
<g transform="translate(302.0,530.0)"><circle r="11.65" fill="#00fa46"/><text transform="scale(0.9,1)" y="5.45" fill="#111">7</text></g>
<g transform="translate(492.0,532.0)"><circle r="11.65" fill="#00f5a0"/><text transform="scale(0.9,1)" y="5.45" fill="#111">5</text></g>
<g transform="translate(179.0,533.2)"><circle r="11.65" fill="#00f5a0"/><text transform="scale(0.9,1)" y="5.45" fill="#111">6</text></g>
<g transform="translate(431.2,534.5)"><circle r="11.65" fill="#00f5a0"/><text transform="scale(0.9,1)" y="5.45" fill="#111">5</text></g>
<g transform="translate(515.2,534.5)"><circle r="11.65" fill="#00f5a0"/><text transform="scale(0.9,1)" y="5.45" fill="#111">5</text></g>
<g transform="translate(366.2,537.0)"><circle r="11.65" fill="#00f5a0"/><text transform="scale(0.9,1)" y="5.45" fill="#111">5</text></g>
<g transform="translate(275.8,538.2)"><circle r="11.65" fill="#00fa46"/><text transform="scale(0.9,1)" y="5.45" fill="#111">7</text></g>
<g transform="translate(379.2,539.2)"><circle r="11.65" fill="#00f5a0"/><text transform="scale(0.9,1)" y="5.45" fill="#111">5</text></g>
<g transform="translate(332.5,540.0)"><circle r="11.65" fill="#00ffff"/><text transform="scale(0.9,1)" y="5.45" fill="#111">3</text></g>
<g transform="translate(412.5,542.0)"><circle r="11.65" fill="#00f5a0"/><text transform="scale(0.9,1)" y="5.45" fill="#111">5</text></g>
<g transform="translate(90.2,545.0)"><circle r="11.65" fill="#00f5a0"/><text transform="scale(0.9,1)" y="5.45" fill="#111">6</text></g>
<g transform="translate(511.5,547.0)"><circle r="11.65" fill="#00f5a0"/><text transform="scale(0.9,1)" y="5.45" fill="#111">5</text></g>
<g transform="translate(424.5,550.0)"><circle r="11.65" fill="#00f5a0"/><text transform="scale(0.9,1)" y="5.45" fill="#111">5</text></g>
<g transform="translate(465.9,551.2)"><circle r="11.65" fill="#00f5a0"/><text transform="scale(0.9,1)" y="5.45" fill="#111">5</text></g>
<g transform="translate(355.5,553.2)"><circle r="11.65" fill="#00f5a0"/><text transform="scale(0.9,1)" y="5.45" fill="#111">4</text></g>
<g transform="translate(400.5,562.5)"><circle r="11.65" fill="#00f5a0"/><text transform="scale(0.9,1)" y="5.45" fill="#111">5</text></g>
<g transform="translate(415.0,562.5)"><circle r="11.65" fill="#00f5a0"/><text transform="scale(0.9,1)" y="5.45" fill="#111">5</text></g>
<g transform="translate(516.5,562.5)"><circle r="11.65" fill="#00f5a0"/><text transform="scale(0.9,1)" y="5.45" fill="#111">5</text></g>
<g transform="translate(538.2,563.0)"><circle r="11.65" fill="#00f5a0"/><text transform="scale(0.9,1)" y="5.45" fill="#111">5</text></g>
<g transform="translate(307.5,563.8)"><circle r="11.65" fill="#00fa46"/><text transform="scale(0.9,1)" y="5.45" fill="#111">7</text></g>
<g transform="translate(475.9,565.8)"><circle r="11.65" fill="#00f5a0"/><text transform="scale(0.9,1)" y="5.45" fill="#111">5</text></g>
<g transform="translate(427.0,568.8)"><circle r="11.65" fill="#00f5a0"/><text transform="scale(0.9,1)" y="5.45" fill="#111">5</text></g>
<g transform="translate(310.0,570.0)"><circle r="11.65" fill="#00f5a0"/><text transform="scale(0.9,1)" y="5.45" fill="#111">5</text></g>
<g transform="translate(511.5,573.8)"><circle r="11.65" fill="#00f5a0"/><text transform="scale(0.9,1)" y="5.45" fill="#111">5</text></g>
<g transform="translate(197.8,574.7)"><circle r="11.65" fill="#00f5a0"/><text transform="scale(0.9,1)" y="5.45" fill="#111">6</text></g>
<g transform="translate(312.5,577.0)"><circle r="11.65" fill="#00f5a0"/><text transform="scale(0.9,1)" y="5.45" fill="#111">5</text></g>
<g transform="translate(358.2,577.5)"><circle r="11.65" fill="#00f5a0"/><text transform="scale(0.9,1)" y="5.45" fill="#111">5</text></g>
<g transform="translate(491.1,578.6)"><circle r="11.65" fill="#00f5a0"/><text transform="scale(0.9,1)" y="5.45" fill="#111">6</text></g>
<g transform="translate(466.2,579.3)"><circle r="11.65" fill="#00f5a0"/><text transform="scale(0.9,1)" y="5.45" fill="#111">5</text></g>
<g transform="translate(333.8,579.5)"><circle r="11.65" fill="#00f5a0"/><text transform="scale(0.9,1)" y="5.45" fill="#111">5</text></g>
<g transform="translate(415.0,580.0)"><circle r="11.65" fill="#00f5a0"/><text transform="scale(0.9,1)" y="5.45" fill="#111">5</text></g>
<g transform="translate(398.5,581.0)"><circle r="11.65" fill="#00f5a0"/><text transform="scale(0.9,1)" y="5.45" fill="#111">5</text></g>
<g transform="translate(544.0,584.8)"><circle r="11.65" fill="#00f5a0"/><text transform="scale(0.9,1)" y="5.45" fill="#111">5</text></g>
<g transform="translate(283.8,585.0)"><circle r="11.65" fill="#00f5a0"/><text transform="scale(0.9,1)" y="5.45" fill="#111">6</text></g>
<g transform="translate(395.0,586.2)"><circle r="11.65" fill="#00f5a0"/><text transform="scale(0.9,1)" y="5.45" fill="#111">6</text></g>
<g transform="translate(530.2,587.0)"><circle r="11.65" fill="#00f5a0"/><text transform="scale(0.9,1)" y="5.45" fill="#111">5</text></g>
<g transform="translate(514.8,588.0)"><circle r="11.65" fill="#00f5a0"/><text transform="scale(0.9,1)" y="5.45" fill="#111">5</text></g>
<g transform="translate(362.5,588.8)"><circle r="11.65" fill="#00f5a0"/><text transform="scale(0.9,1)" y="5.45" fill="#111">5</text></g>
<g transform="translate(327.5,589.0)"><circle r="11.65" fill="#00f5a0"/><text transform="scale(0.9,1)" y="5.45" fill="#111">4</text></g>
<g transform="translate(441.4,593.6)"><circle r="11.65" fill="#00f5a0"/><text transform="scale(0.9,1)" y="5.45" fill="#111">5</text></g>
<g transform="translate(459.9,594.3)"><circle r="11.65" fill="#00f5a0"/><text transform="scale(0.9,1)" y="5.45" fill="#111">5</text></g>
<g transform="translate(423.8,596.0)"><circle r="11.65" fill="#00f5a0"/><text transform="scale(0.9,1)" y="5.45" fill="#111">6</text></g>
<g transform="translate(278.8,597.2)"><circle r="11.65" fill="#00f5a0"/><text transform="scale(0.9,1)" y="5.45" fill="#111">6</text></g>
<g transform="translate(398.8,599.5)"><circle r="11.65" fill="#00f5a0"/><text transform="scale(0.9,1)" y="5.45" fill="#111">5</text></g>
<g transform="translate(31.5,600.0)"><circle r="11.65" fill="#00fa46"/><text transform="scale(0.9,1)" y="5.45" fill="#111">8</text></g>
<g transform="translate(331.2,601.0)"><circle r="11.65" fill="#00f5a0"/><text transform="scale(0.9,1)" y="5.45" fill="#111">4</text></g>
<g transform="translate(507.0,601.0)"><circle r="11.65" fill="#00f5a0"/><text transform="scale(0.9,1)" y="5.45" fill="#111">5</text></g>
<g transform="translate(371.2,602.0)"><circle r="11.65" fill="#00f5a0"/><text transform="scale(0.9,1)" y="5.45" fill="#111">6</text></g>
<g transform="translate(410.0,604.8)"><circle r="11.65" fill="#00f5a0"/><text transform="scale(0.9,1)" y="5.45" fill="#111">5</text></g>
<g transform="translate(108.2,606.5)"><circle r="11.65" fill="#00f5a0"/><text transform="scale(0.9,1)" y="5.45" fill="#111">6</text></g>
<g transform="translate(470.7,610.0)"><circle r="11.65" fill="#00f5a0"/><text transform="scale(0.9,1)" y="5.45" fill="#111">5</text></g>
<g transform="translate(120.2,610.6)"><circle r="11.65" fill="#00fa46"/><text transform="scale(0.9,1)" y="5.45" fill="#111">7</text></g>
<g transform="translate(342.7,611.4)"><circle r="11.65" fill="#00ffff"/><text transform="scale(0.9,1)" y="5.45" fill="#111">3</text></g>
<g transform="translate(416.3,613.2)"><circle r="11.65" fill="#00f5a0"/><text transform="scale(0.9,1)" y="5.45" fill="#111">6</text></g>
<g transform="translate(505.5,615.5)"><circle r="11.65" fill="#00f5a0"/><text transform="scale(0.9,1)" y="5.45" fill="#111">6</text></g>
<g transform="translate(292.0,615.6)"><circle r="11.65" fill="#00fa46"/><text transform="scale(0.9,1)" y="5.45" fill="#111">7</text></g>
<g transform="translate(356.2,615.8)"><circle r="11.65" fill="#00f5a0"/><text transform="scale(0.9,1)" y="5.45" fill="#111">6</text></g>
<g transform="translate(262.0,616.6)"><circle r="11.65" fill="#00fa46"/><text transform="scale(0.9,1)" y="5.45" fill="#111">8</text></g>
<g transform="translate(488.5,621.0)"><circle r="11.65" fill="#00f5a0"/><text transform="scale(0.9,1)" y="5.45" fill="#111">5</text></g>
<g transform="translate(437.4,622.3)"><circle r="11.65" fill="#00f5a0"/><text transform="scale(0.9,1)" y="5.45" fill="#111">6</text></g>
<g transform="translate(372.5,627.8)"><circle r="11.65" fill="#00f5a0"/><text transform="scale(0.9,1)" y="5.45" fill="#111">6</text></g>
<g transform="translate(523.2,628.2)"><circle r="11.65" fill="#00f5a0"/><text transform="scale(0.9,1)" y="5.45" fill="#111">6</text></g>
<g transform="translate(466.7,629.5)"><circle r="11.65" fill="#00f5a0"/><text transform="scale(0.9,1)" y="5.45" fill="#111">6</text></g>
<g transform="translate(397.5,631.5)"><circle r="11.65" fill="#00f5a0"/><text transform="scale(0.9,1)" y="5.45" fill="#111">6</text></g>
<g transform="translate(346.2,631.5)"><circle r="11.65" fill="#00f5a0"/><text transform="scale(0.9,1)" y="5.45" fill="#111">6</text></g>
<g transform="translate(457.5,632.0)"><circle r="11.65" fill="#00f5a0"/><text transform="scale(0.9,1)" y="5.45" fill="#111">6</text></g>
<g transform="translate(67.8,634.0)"><circle r="11.65" fill="#00fa46"/><text transform="scale(0.9,1)" y="5.45" fill="#111">8</text></g>
<g transform="translate(444.7,634.8)"><circle r="11.65" fill="#00f5a0"/><text transform="scale(0.9,1)" y="5.45" fill="#111">6</text></g>
<g transform="translate(471.0,635.0)"><circle r="11.65" fill="#00f5a0"/><text transform="scale(0.9,1)" y="5.45" fill="#111">6</text></g>
<g transform="translate(333.2,639.5)"><circle r="11.65" fill="#00f5a0"/><text transform="scale(0.9,1)" y="5.45" fill="#111">6</text></g>
<g transform="translate(462.6,639.5)"><circle r="11.65" fill="#00f5a0"/><text transform="scale(0.9,1)" y="5.45" fill="#111">6</text></g>
<g transform="translate(468.5,640.5)"><circle r="11.65" fill="#00f5a0"/><text transform="scale(0.9,1)" y="5.45" fill="#111">6</text></g>
<g transform="translate(464.3,644.2)"><circle r="11.65" fill="#00f5a0"/><text transform="scale(0.9,1)" y="5.45" fill="#111">6</text></g>
<g transform="translate(482.2,644.5)"><circle r="11.65" fill="#00f5a0"/><text transform="scale(0.9,1)" y="5.45" fill="#111">6</text></g>
<g transform="translate(505.1,645.2)"><circle r="11.65" fill="#00f5a0"/><text transform="scale(0.9,1)" y="5.45" fill="#111">6</text></g>
<g transform="translate(440.0,648.0)"><circle r="11.65" fill="#00f5a0"/><text transform="scale(0.9,1)" y="5.45" fill="#111">6</text></g>
<g transform="translate(405.0,650.8)"><circle r="11.65" fill="#00f5a0"/><text transform="scale(0.9,1)" y="5.45" fill="#111">6</text></g>
<g transform="translate(516.5,654.5)"><circle r="11.65" fill="#00f5a0"/><text transform="scale(0.9,1)" y="5.45" fill="#111">6</text></g>
<g transform="translate(408.8,654.5)"><circle r="11.65" fill="#00f5a0"/><text transform="scale(0.9,1)" y="5.45" fill="#111">6</text></g>
<g transform="translate(448.2,654.8)"><circle r="11.65" fill="#00f5a0"/><text transform="scale(0.9,1)" y="5.45" fill="#111">6</text></g>
<g transform="translate(417.0,655.0)"><circle r="11.65" fill="#00f5a0"/><text transform="scale(0.9,1)" y="5.45" fill="#111">6</text></g>
<g transform="translate(476.0,656.3)"><circle r="11.65" fill="#00f5a0"/><text transform="scale(0.9,1)" y="5.45" fill="#111">6</text></g>
<g transform="translate(546.0,657.8)"><circle r="11.65" fill="#00f5a0"/><text transform="scale(0.9,1)" y="5.45" fill="#111">6</text></g>
<g transform="translate(507.7,661.3)"><circle r="11.65" fill="#00f5a0"/><text transform="scale(0.9,1)" y="5.45" fill="#111">6</text></g>
<g transform="translate(302.0,661.5)"><circle r="11.65" fill="#00fa46"/><text transform="scale(0.9,1)" y="5.45" fill="#111">7</text></g>
<g transform="translate(326.2,661.5)"><circle r="11.65" fill="#00f5a0"/><text transform="scale(0.9,1)" y="5.45" fill="#111">5</text></g>
<g transform="translate(487.3,662.7)"><circle r="11.65" fill="#00f5a0"/><text transform="scale(0.9,1)" y="5.45" fill="#111">5</text></g>
<g transform="translate(427.5,664.5)"><circle r="11.65" fill="#00f5a0"/><text transform="scale(0.9,1)" y="5.45" fill="#111">6</text></g>
<g transform="translate(368.8,667.8)"><circle r="11.65" fill="#00f5a0"/><text transform="scale(0.9,1)" y="5.45" fill="#111">6</text></g>
<g transform="translate(465.1,669.5)"><circle r="11.65" fill="#00fa46"/><text transform="scale(0.9,1)" y="5.45" fill="#111">7</text></g>
<g transform="translate(423.3,674.2)"><circle r="11.65" fill="#00fa46"/><text transform="scale(0.9,1)" y="5.45" fill="#111">7</text></g>
<g transform="translate(500.1,675.0)"><circle r="11.65" fill="#00f5a0"/><text transform="scale(0.9,1)" y="5.45" fill="#111">6</text></g>
<g transform="translate(343.8,675.8)"><circle r="11.65" fill="#00f5a0"/><text transform="scale(0.9,1)" y="5.45" fill="#111">6</text></g>
<g transform="translate(432.6,677.0)"><circle r="11.65" fill="#00fa46"/><text transform="scale(0.9,1)" y="5.45" fill="#111">7</text></g>
<g transform="translate(284.5,679.0)"><circle r="11.65" fill="#00fa46"/><text transform="scale(0.9,1)" y="5.45" fill="#111">8</text></g>
<g transform="translate(473.6,679.5)"><circle r="11.65" fill="#00fa46"/><text transform="scale(0.9,1)" y="5.45" fill="#111">7</text></g>
<g transform="translate(445.1,680.0)"><circle r="11.65" fill="#00fa46"/><text transform="scale(0.9,1)" y="5.45" fill="#111">7</text></g>
<g transform="translate(313.8,680.8)"><circle r="11.65" fill="#00fa46"/><text transform="scale(0.9,1)" y="5.45" fill="#111">7</text></g>
<g transform="translate(404.8,682.0)"><circle r="11.65" fill="#00fa46"/><text transform="scale(0.9,1)" y="5.45" fill="#111">7</text></g>
<g transform="translate(335.0,685.8)"><circle r="11.65" fill="#00f5a0"/><text transform="scale(0.9,1)" y="5.45" fill="#111">6</text></g>
<g transform="translate(310.0,688.2)"><circle r="11.65" fill="#00f5a0"/><text transform="scale(0.9,1)" y="5.45" fill="#111">5</text></g>
<g transform="translate(399.5,695.0)"><circle r="11.65" fill="#00fa46"/><text transform="scale(0.9,1)" y="5.45" fill="#111">8</text></g>
<g transform="translate(428.8,697.5)"><circle r="11.65" fill="#00fa46"/><text transform="scale(0.9,1)" y="5.45" fill="#111">8</text></g>
<g transform="translate(376.8,700.8)"><circle r="11.65" fill="#00fa46"/><text transform="scale(0.9,1)" y="5.45" fill="#111">8</text></g>
<g transform="translate(279.2,702.8)"><circle r="11.65" fill="#00fa46"/><text transform="scale(0.9,1)" y="5.45" fill="#111">7</text></g>
<g transform="translate(303.8,712.0)"><circle r="11.65" fill="#00fa46"/><text transform="scale(0.9,1)" y="5.45" fill="#111">8</text></g>
<g transform="translate(247.8,720.8)"><circle r="11.65" fill="#00fa46"/><text transform="scale(0.9,1)" y="5.45" fill="#111">8</text></g>
<g transform="translate(250.2,732.0)"><circle r="11.65" fill="#00fa46"/><text transform="scale(0.9,1)" y="5.45" fill="#111">8</text></g>
<g transform="translate(206.0,743.2)"><circle r="11.65" fill="#00fa46"/><text transform="scale(0.9,1)" y="5.45" fill="#111">9</text></g>
<g transform="translate(371.2,775.5)"><circle r="11.65" fill="#00fa46"/><text transform="scale(0.9,1)" y="5.45" fill="#111">8</text></g>
</g></svg>
<div id="zc"><div class="a"><i style="left:8.8px;top:13.8px;width:12.4px;height:2.4px"></i><i style="left:13.6px;top:9px;width:2.8px;height:12px"></i></div><div class="b"><i style="left:9.3px;top:13.8px;width:12.4px;height:2.4px"></i></div></div>
</div>
<div id="bot"></div>
</body></html>
